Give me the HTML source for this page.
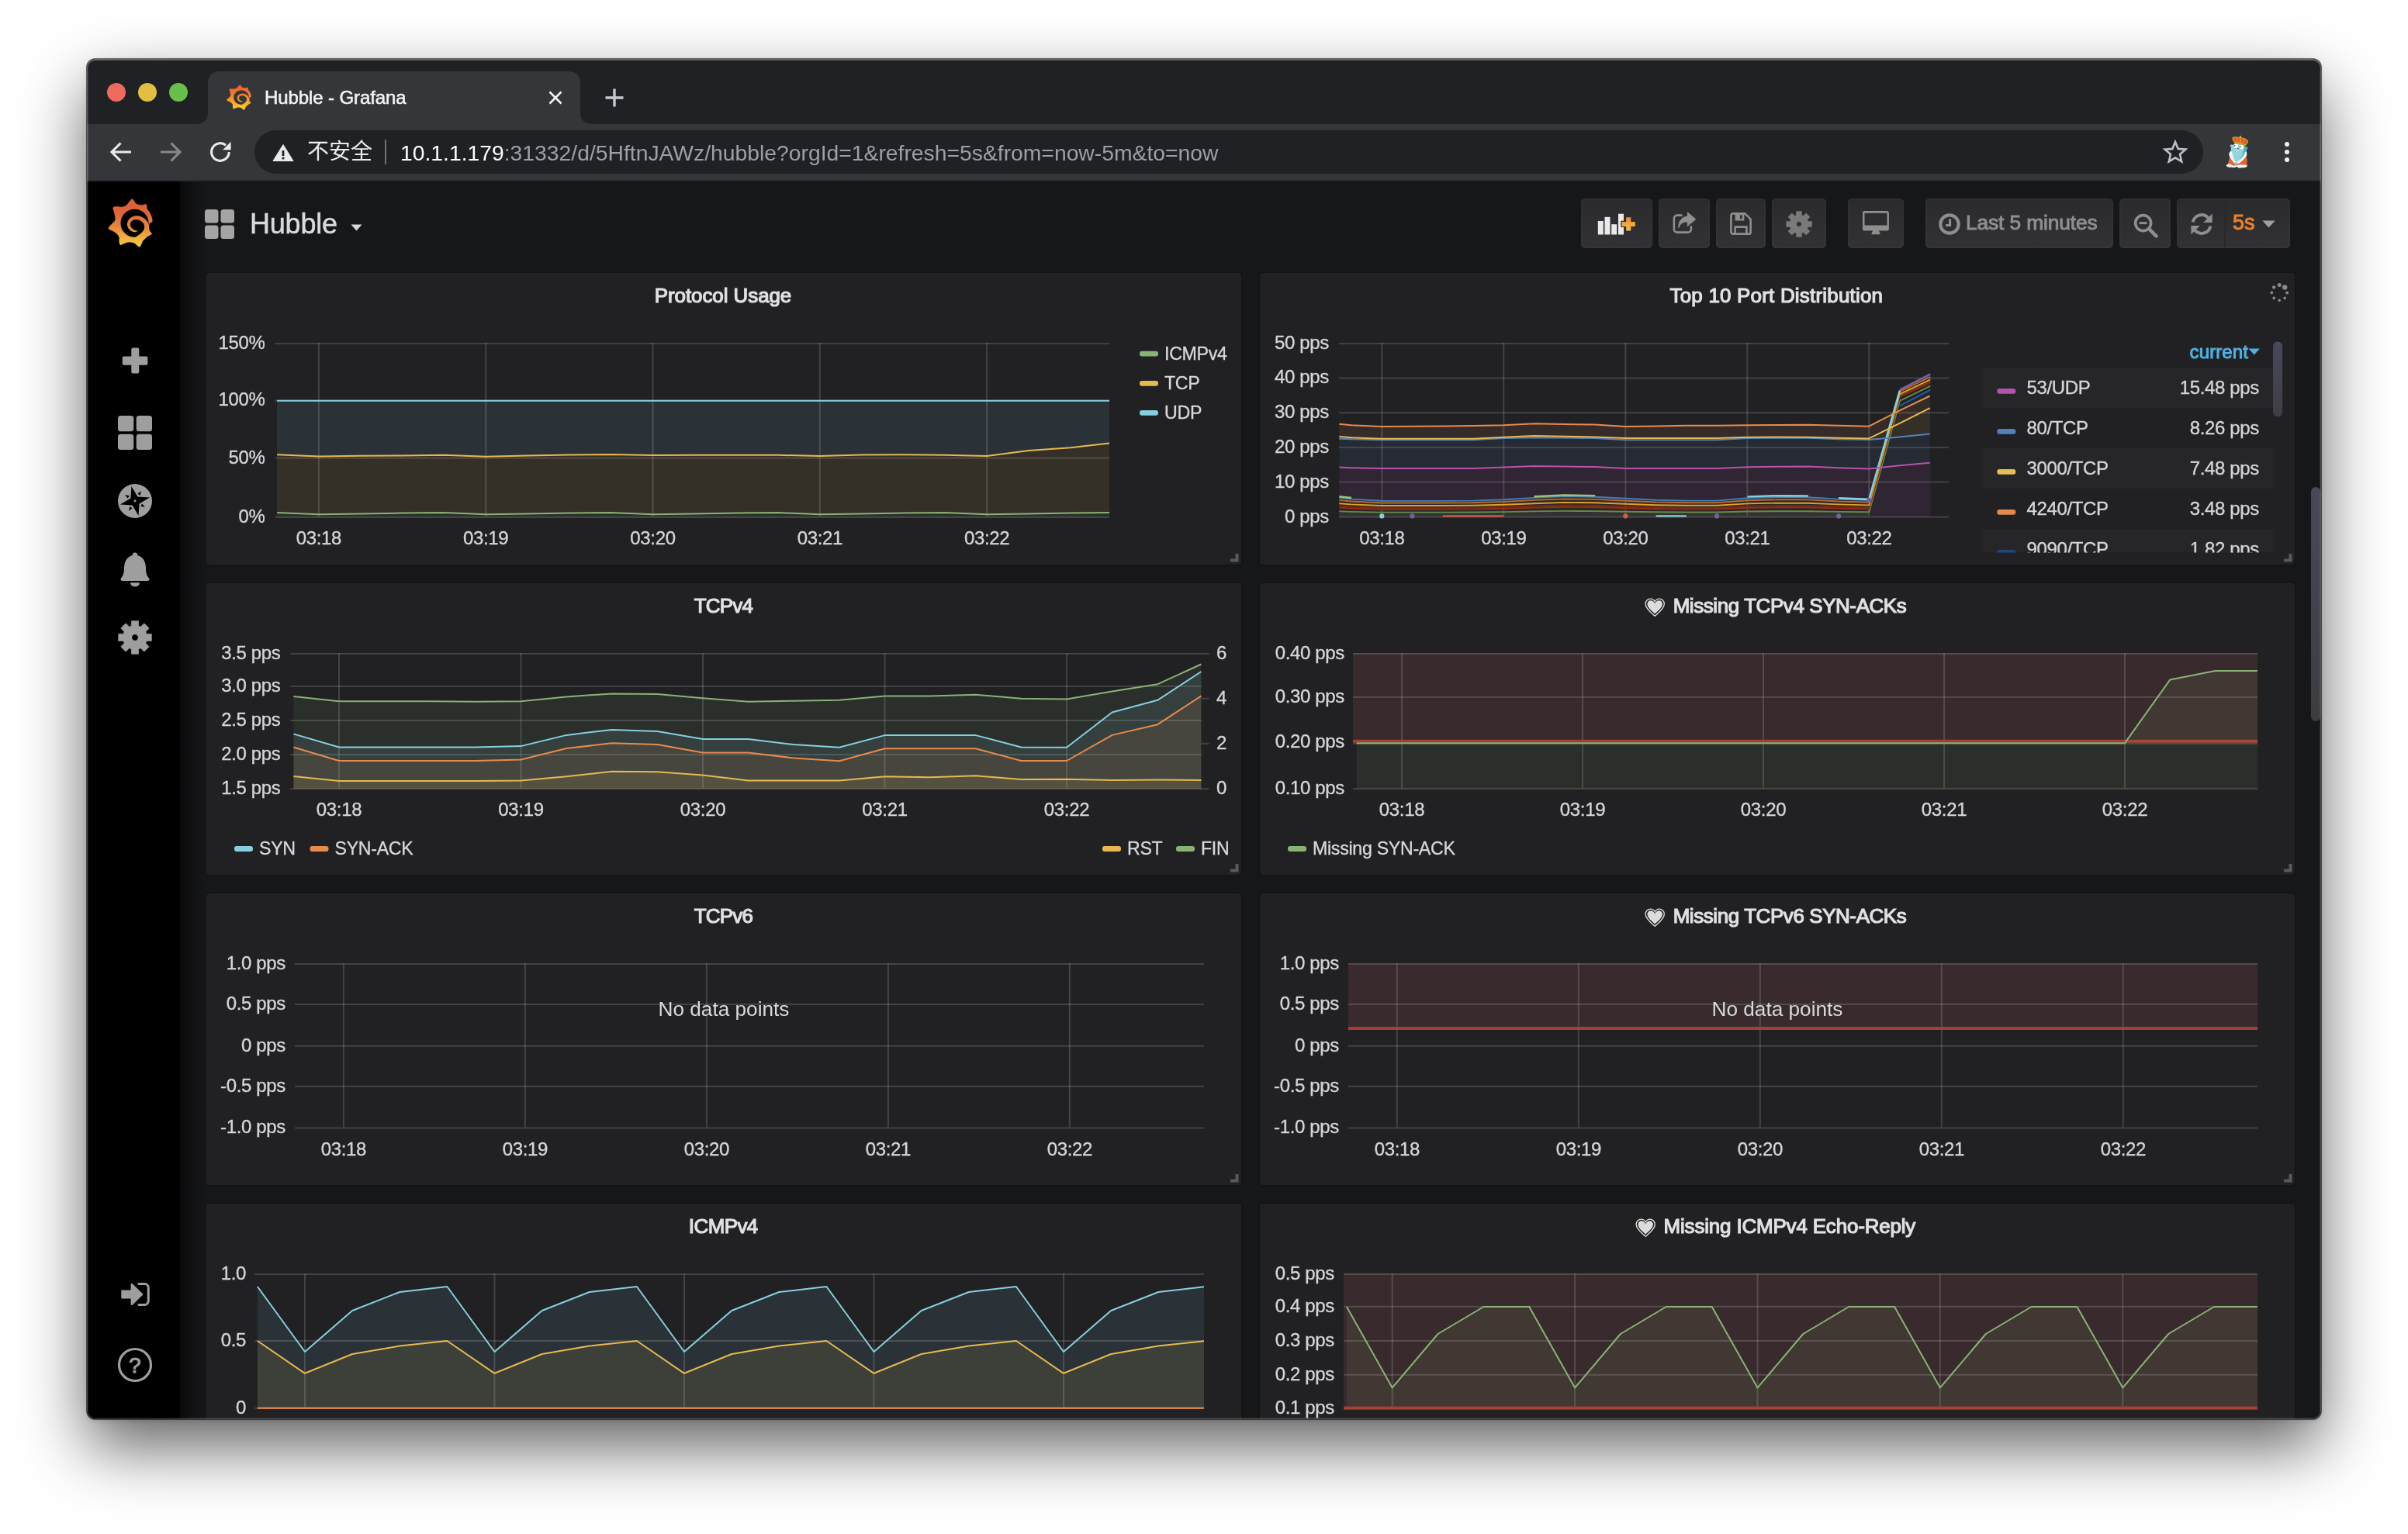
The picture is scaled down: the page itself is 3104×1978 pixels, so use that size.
<!DOCTYPE html>
<html lang="zh"><head><meta charset="utf-8"><title>Hubble - Grafana</title>
<style>
html,body{margin:0;padding:0;background:#fff;overflow:hidden;}
body{width:3104px;height:1978px;position:relative;overflow:hidden;font-family:'Liberation Sans', sans-serif;}
#win{position:absolute;left:112px;top:76px;width:2880px;height:1754px;border-radius:11px;overflow:hidden;background:#161719;
 box-shadow:0 36px 84px rgba(0,0,0,0.62),0 0 0 1px rgba(0,0,0,0.55),0 2px 6px rgba(0,0,0,0.12);}
#abs{position:absolute;left:-112px;top:-76px;width:3104px;height:1978px;will-change:transform;}
#abs div,#abs span,#abs svg{position:absolute;}
.t{white-space:pre;line-height:1;}
.med{-webkit-text-stroke:1.2px currentColor;}
.med2{-webkit-text-stroke:0.95px currentColor;}
.panel{background:#212124;border:2px solid #141414;border-radius:6px;box-sizing:border-box;overflow:hidden;}
.ptitle{left:0;right:0;top:11.5px;height:36px;display:flex;justify-content:center;align-items:center;padding-right:2px;box-sizing:border-box;font-size:25.9px;color:#dfe0e2;}
.ptitle span{position:static !important;}
.nbtn{top:256px;height:64px;border-radius:5px;background:linear-gradient(#2a2a2d,#323235);box-shadow:inset 0 0 0 2px rgba(255,255,255,0.022);}
svg text{font-family:'Liberation Sans', sans-serif;}
.ax{font-size:24px;letter-spacing:-0.35px;fill:#d4d5d6;stroke:#d4d5d6;stroke-width:0.35px;}
</style></head><body>
<div id="win"><div id="abs">
<div id="tabstrip" style="left:112px;top:76px;width:2880px;height:84px;background:#202124;"></div><div id="toolbar" style="left:112px;top:160px;width:2880px;height:72px;background:#35363a;"></div><div style="left:112px;top:232px;width:2880px;height:2px;background:#28292c;"></div><svg id="tab" style="left:0;top:0" width="3104" height="240"><path d="M252,160 Q268,160 268,144 L268,108 Q268,92 284,92 L732,92 Q748,92 748,108 L748,144 Q748,160 764,160 Z" fill="#35363a"/></svg><div style="left:138px;top:107px;width:24px;height:24px;border-radius:50%;background:#ed6a5e;"></div><div style="left:178px;top:107px;width:24px;height:24px;border-radius:50%;background:#e2bf41;"></div><div style="left:218px;top:107px;width:24px;height:24px;border-radius:50%;background:#68c04b;"></div><div style="left:292px;top:109px;width:32px;height:33px;"><svg width="32" height="33" viewBox="170 140 1120 1215" preserveAspectRatio="none"><defs><linearGradient id="gfav" gradientUnits="userSpaceOnUse" x1="0" y1="150" x2="0" y2="1340"><stop offset="0" stop-color="#ef5b2a"/><stop offset="0.35" stop-color="#f27a2a"/><stop offset="0.7" stop-color="#f7a825"/><stop offset="1" stop-color="#fbd32a"/></linearGradient></defs><path d="M775.0,150.0 L790.6,156.1 L805.1,172.6 L818.8,193.3 L832.0,212.0 L842.9,228.6 L852.1,245.8 L863.1,261.9 L880.0,275.0 L906.1,284.7 L938.6,292.1 L971.8,297.1 L1000.0,300.0 L1021.4,299.8 L1039.1,296.9 L1054.7,293.0 L1070.0,290.0 L1085.7,287.0 L1100.9,283.4 L1114.4,281.9 L1125.0,285.0 L1131.7,294.4 L1135.3,308.4 L1137.5,324.5 L1140.0,340.0 L1141.6,353.9 L1141.9,367.8 L1143.8,382.8 L1150.0,400.0 L1162.8,419.9 L1180.2,441.9 L1198.7,465.4 L1215.0,490.0 L1228.8,516.6 L1241.6,545.0 L1252.9,573.4 L1262.0,600.0 L1268.6,625.1 L1273.2,649.6 L1275.9,671.7 L1277.0,690.0 L1276.8,703.4 L1275.1,713.0 L1271.3,720.3 L1265.0,727.0 L1254.5,731.3 L1240.7,733.0 L1226.5,736.2 L1215.0,745.0 L1206.5,761.2 L1199.6,782.4 L1194.6,806.1 L1192.0,830.0 L1192.0,854.9 L1194.4,881.6 L1198.8,907.5 L1205.0,930.0 L1214.2,948.5 L1226.2,964.4 L1238.4,978.0 L1248.0,990.0 L1256.0,999.4 L1263.2,1006.2 L1267.1,1012.5 L1265.0,1020.0 L1254.2,1029.5 L1236.7,1039.9 L1217.1,1050.3 L1200.0,1060.0 L1186.8,1068.0 L1175.0,1074.9 L1163.2,1082.4 L1150.0,1092.0 L1134.3,1105.1 L1117.2,1120.5 L1100.2,1136.2 L1085.0,1150.0 L1071.9,1160.6 L1060.2,1169.2 L1049.6,1178.3 L1040.0,1190.0 L1032.3,1205.2 L1026.3,1222.5 L1020.1,1241.1 L1012.0,1260.0 L1001.8,1282.3 L990.4,1307.5 L977.3,1328.9 L962.0,1340.0 L943.0,1336.5 L921.0,1322.8 L899.0,1305.2 L880.0,1290.0 L866.2,1277.8 L855.5,1265.6 L844.6,1254.3 L830.0,1245.0 L810.1,1237.9 L786.9,1232.4 L762.7,1228.5 L740.0,1226.0 L719.8,1224.7 L700.6,1224.6 L681.2,1226.3 L660.0,1230.0 L636.0,1236.8 L610.1,1246.1 L584.2,1256.1 L560.0,1265.0 L536.9,1275.3 L514.4,1287.1 L494.1,1294.5 L478.0,1292.0 L466.9,1275.1 L459.7,1247.7 L455.1,1217.0 L452.0,1190.0 L452.1,1168.7 L455.3,1149.2 L457.6,1130.2 L455.0,1110.0 L446.4,1087.7 L433.9,1064.4 L418.3,1041.3 L400.0,1020.0 L378.5,1001.0 L353.8,983.4 L327.1,966.7 L300.0,950.0 L267.8,934.3 L231.4,919.7 L200.6,903.9 L185.0,885.0 L190.6,861.2 L211.1,834.1 L237.8,806.1 L262.0,780.0 L284.1,756.4 L307.9,734.1 L329.5,712.1 L345.0,690.0 L353.0,668.4 L355.6,647.5 L354.6,625.3 L352.0,600.0 L346.9,569.7 L338.8,535.9 L329.8,501.7 L322.0,470.0 L313.1,440.2 L302.9,411.1 L296.7,385.2 L300.0,365.0 L316.0,351.8 L341.1,344.1 L370.7,340.0 L400.0,338.0 L428.6,340.2 L458.8,346.6 L489.5,352.2 L520.0,352.0 L551.4,344.2 L583.6,331.8 L614.1,316.4 L640.0,300.0 L659.3,282.2 L673.9,262.2 L687.1,241.7 L702.0,222.0 L719.9,200.4 L738.8,177.2 L757.6,158.4Z" fill="url(#gfav)" stroke="url(#gfav)" stroke-width="6" stroke-linejoin="round"/><circle cx="837" cy="752" r="349" fill="#35363a"/><path d="M921.4,934.6 L917.8,935.2 L913.0,936.0 L907.4,937.0 L901.2,938.0 L894.8,938.9 L888.5,939.5 L882.7,939.6 L877.6,939.2 L872.8,938.6 L868.1,937.8 L863.6,936.8 L859.4,935.5 L855.2,934.1 L850.9,932.3 L846.2,930.3 L840.9,927.8 L834.5,924.8 L827.6,921.6 L820.5,918.1 L813.4,914.4 L806.4,910.4 L799.8,906.1 L793.7,901.6 L788.1,896.8 L782.0,891.2 L775.5,884.8 L769.0,877.9 L762.7,870.8 L756.8,863.4 L751.5,856.1 L747.0,849.0 L743.2,842.1 L739.8,834.7 L736.5,827.0 L733.7,819.1 L731.3,811.2 L729.5,803.4 L728.4,795.8 L727.8,788.5 L728.0,781.1 L728.8,773.0 L730.2,764.1 L732.2,755.0 L734.8,745.9 L737.9,737.1 L741.6,729.1 L745.7,721.9 L750.1,715.8 L755.5,710.0 L762.2,703.8 L770.1,697.6 L778.9,691.6 L788.3,686.0 L798.0,680.8 L807.7,676.3 L817.2,672.5 L826.7,669.3 L836.4,666.5 L846.3,664.3 L856.3,662.7 L866.3,661.7 L876.3,661.2 L886.2,661.5 L895.9,662.3 L906.1,663.9 L917.3,666.3 L929.0,669.5 L941.0,673.4 L953.0,677.9 L964.6,682.9 L975.7,688.2 L986.0,693.9 L995.8,699.9 L1005.5,706.5 L1014.9,713.7 L1023.9,721.2 L1032.2,729.0 L1039.9,737.0 L1046.8,745.1 L1052.8,753.3 L1058.4,761.9 L1063.6,771.1 L1068.3,780.7 L1072.4,790.6 L1075.8,800.6 L1078.5,810.5 L1080.4,820.3 L1081.5,829.7 L1081.9,839.3 L1081.5,849.6 L1080.5,860.5 L1078.8,871.8 L1076.3,883.3 L1073.3,894.7 L1069.6,905.8 L1065.4,916.0 L1060.8,925.5 L1055.4,934.7 L1049.3,943.9 L1042.5,953.2 L1035.1,962.4 L1027.2,971.5 L1018.9,980.7 L1010.2,989.7 L1001.2,998.4 L991.7,1006.8 L981.8,1014.8 L971.7,1022.5 L961.7,1029.7 L952.0,1036.4 L942.8,1042.8 L934.5,1048.5 L926.5,1054.3 L917.6,1060.6 L907.9,1067.4 L897.6,1074.3 L887.0,1081.1 L876.5,1087.5 L866.3,1093.5 L857.9,1098.3 L851.5,1102.0 L844.8,1105.4 L837.0,1108.7 L828.4,1111.6 L819.7,1114.2 L811.0,1116.4 L802.2,1118.4 L795.0,1120.2 L805.0,1239.8 L809.8,1240.6 L816.6,1241.8 L826.4,1243.3 L838.4,1244.7 L852.4,1245.6 L867.9,1245.7 L885.0,1244.4 L902.1,1241.7 L917.8,1238.3 L933.4,1234.7 L949.8,1230.4 L966.8,1225.1 L984.1,1218.8 L1001.6,1211.2 L1018.9,1202.1 L1035.5,1191.5 L1050.8,1179.5 L1064.7,1166.7 L1077.6,1153.0 L1089.6,1138.8 L1100.7,1124.2 L1111.0,1109.5 L1120.6,1094.8 L1129.8,1080.3 L1138.4,1065.9 L1146.5,1051.2 L1154.3,1036.0 L1161.6,1020.3 L1168.4,1004.3 L1174.5,987.8 L1180.0,971.0 L1184.6,954.0 L1188.3,937.1 L1191.3,920.0 L1193.7,902.7 L1195.4,885.2 L1196.2,867.5 L1196.1,849.7 L1194.9,831.9 L1192.5,814.3 L1188.8,797.1 L1184.1,780.4 L1178.4,764.1 L1171.8,748.3 L1164.3,733.0 L1156.0,718.3 L1147.0,704.2 L1137.2,690.7 L1126.4,677.7 L1114.8,665.3 L1102.5,653.7 L1089.6,642.7 L1076.3,632.5 L1062.5,622.9 L1048.4,614.2 L1034.0,606.1 L1019.0,598.8 L1003.4,592.0 L987.3,585.9 L970.9,580.5 L954.3,575.9 L937.5,572.1 L920.7,569.3 L904.1,567.7 L887.6,567.2 L871.5,567.9 L855.6,569.7 L840.2,572.4 L825.1,576.1 L810.6,580.5 L796.5,585.6 L782.8,591.5 L769.3,598.2 L756.0,605.8 L742.8,614.3 L730.1,623.5 L717.9,633.5 L706.3,644.2 L695.6,655.7 L685.9,668.2 L677.5,681.5 L670.5,695.4 L664.8,709.5 L660.2,723.6 L656.8,737.8 L654.3,751.7 L652.7,765.4 L652.0,778.9 L652.4,792.6 L653.9,806.1 L656.5,819.3 L659.9,832.0 L664.2,844.2 L669.1,855.9 L674.6,867.1 L680.8,877.9 L688.0,888.7 L696.1,899.0 L704.8,908.7 L713.9,917.7 L723.3,926.1 L732.8,933.8 L742.3,940.8 L751.9,947.2 L762.1,953.0 L772.6,957.9 L783.0,961.9 L793.2,965.1 L803.1,967.7 L812.4,969.7 L821.0,971.1 L829.1,972.2 L837.0,973.0 L844.6,973.2 L851.7,972.8 L858.5,972.0 L864.8,970.6 L870.8,969.0 L876.5,967.0 L882.4,964.8 L888.6,961.9 L894.9,958.3 L900.9,954.3 L906.4,950.2 L911.5,946.2 L916.0,942.6 L919.7,939.6 L922.6,937.4Z" fill="url(#gfav)"/></svg></div><div class="t" style="left:341px;top:114px;font-size:24px;letter-spacing:-0.1px;-webkit-text-stroke:0.55px #f1f3f4;color:#f1f3f4;">Hubble - Grafana</div><svg style="left:707px;top:117px" width="18" height="18" viewBox="0 0 18 18"><path d="M1.5,1.5 L16.5,16.5 M16.5,1.5 L1.5,16.5" stroke="#f1f3f4" stroke-width="2.6" fill="none"/></svg><svg style="left:780px;top:114px" width="24" height="24" viewBox="0 0 24 24"><path d="M12,0.5 V23.5 M0.5,12 H23.5" stroke="#c6c9ce" stroke-width="3.4" fill="none"/></svg><svg style="left:141px;top:181px" width="30" height="30" viewBox="0 0 30 30"><path d="M28,15 H4 M14.5,3.5 L3,15 L14.5,26.5" stroke="#e8eaed" stroke-width="3.1" fill="none" stroke-linejoin="miter"/></svg><svg style="left:205px;top:181px" width="30" height="30" viewBox="0 0 30 30"><path d="M2,15 H26 M15.5,3.5 L27,15 L15.5,26.5" stroke="#86888c" stroke-width="3.1" fill="none" stroke-linejoin="miter"/></svg><svg style="left:269px;top:181px" width="32" height="30" viewBox="0 0 32 30"><path d="M26.2,15 A11.3,11.3 0 1,1 22.0,6.2" stroke="#e8eaed" stroke-width="3.1" fill="none"/><path d="M28.6,1.8 V12.2 H18.2 Z" fill="#e8eaed"/></svg><div id="omnibox" style="left:328px;top:168px;width:2512px;height:56px;border-radius:28px;background:#202124;"></div><svg style="left:351px;top:185px" width="28" height="24" viewBox="0 0 28 24"><path d="M14,1.5 L27,22.5 H1 Z" fill="#e8eaed" stroke="#e8eaed" stroke-width="1" stroke-linejoin="round"/><rect x="12.6" y="9" width="2.8" height="7" fill="#202124"/><rect x="12.6" y="17.6" width="2.8" height="2.8" fill="#202124"/></svg><div class="t" style="left:396px;top:178px;font-size:28px;color:#e8eaed;font-family:'Liberation Sans', 'Noto Sans CJK SC', sans-serif;line-height:36px;">不安全</div><div style="left:496px;top:180px;width:2px;height:32px;background:#6e7074;"></div><div class="t" id="url" style="left:516px;top:181px;font-size:28.3px;color:#9aa0a6;line-height:32px;"><span style="position:static;color:#fff">10.1.1.179</span>:31332/d/5HftnJAWz/hubble?orgId=1&amp;refresh=5s&amp;from=now-5m&amp;to=now</div><svg style="left:2787px;top:179px" width="34" height="34" viewBox="0 0 34 34"><path d="M17.00,4.00 L20.70,12.90 L30.31,13.67 L22.99,19.95 L25.23,29.33 L17.00,24.30 L8.77,29.33 L11.01,19.95 L3.69,13.67 L13.30,12.90Z" fill="none" stroke="#bdc1c6" stroke-width="2.6" stroke-linejoin="miter"/></svg><svg style="left:2868.2px;top:173.7px" width="31.9" height="44.7" viewBox="40 30 70 98"><path d="M52,98 L58,84 L98,84 L103,100 L102,119 L47,119 Z" fill="#e8642c"/><path d="M43,116 Q48,110 56,113 Q62,116 66,118 Q70,113 76,116 Q84,112 92,115 Q100,112 104,118 Q98,125 88,122 Q80,126 74,120 Q66,124 58,121 Q48,124 43,116Z" fill="#f7f7f7"/><circle cx="59" cy="61" r="4.2" fill="#7fcad6"/><circle cx="100.5" cy="67" r="4" fill="#4bb6c6"/><path d="M60,60 Q70,52 84,56 Q100,60 101,76 Q100,96 72,110 Q58,96 57,78 Q56,66 60,60Z" fill="#93d4dd"/><path d="M90,58 Q100,62 101,76 Q100,92 80,104 Q96,84 90,58Z" fill="#4fb8c8"/><path d="M54,77 Q58,74 61,80 Q62,96 72,108 L70,113 Q56,100 52,88 Q51,80 54,77Z" fill="#f7f7f7"/><path d="M101,78 Q104,82 101,90 Q92,104 75,113 L72,108 Q92,96 97,80 Q99,76 101,78Z" fill="#f7f7f7"/><circle cx="71.5" cy="112.5" r="3.6" fill="#f2f2f2" stroke="#2a9db0" stroke-width="2.2"/><circle cx="66.5" cy="110.5" r="1.6" fill="#e9b932"/><circle cx="71" cy="61" r="6.3" fill="#fff"/><circle cx="87.5" cy="64.5" r="6.3" fill="#fff"/><circle cx="67.6" cy="60.2" r="1.9" fill="#2b3f5a"/><circle cx="83.6" cy="63.4" r="1.9" fill="#2b3f5a"/><ellipse cx="77.2" cy="69" rx="2.6" ry="1.7" fill="#2b6f86"/><rect x="74.6" y="71.6" width="4.4" height="4.6" rx="1.2" fill="#f3e3e3"/><path d="M62.5,43 Q60,36.5 66,36.8 Q73,35 78,38.5 L83.6,33.6 L86.5,38.5 Q95,38.5 102.5,44.5 Q106.5,49 103,53 L97,60.5 Q82,52.5 68.5,54 Z" fill="#e9572b" stroke="#c9a428" stroke-width="2.6" stroke-linejoin="round"/><path d="M84.8,32 L84,50" stroke="#d8b52e" stroke-width="2.4"/><path d="M73,38 L74,50 M95,41 L91,52" stroke="#c9a428" stroke-width="1.8" fill="none"/><path d="M67.5,52 Q82,50 97.5,58.5" stroke="#c9a428" stroke-width="3.4" fill="none"/></svg><div style="left:2945px;top:183px;width:6px;height:6px;border-radius:50%;background:#eceef0;"></div><div style="left:2945px;top:193px;width:6px;height:6px;border-radius:50%;background:#eceef0;"></div><div style="left:2945px;top:203px;width:6px;height:6px;border-radius:50%;background:#eceef0;"></div><div id="page" style="left:112px;top:234px;width:2880px;height:1600px;background:#161719;"></div><div style="left:232px;top:234px;width:36px;height:1600px;background:linear-gradient(to right,rgba(0,0,0,0.55),rgba(0,0,0,0.25) 45%,rgba(0,0,0,0));"></div><div id="sidemenu" style="left:112px;top:234px;width:120px;height:1600px;background:#000;"></div><div style="left:139px;top:256px;width:58px;height:63px;"><svg width="58" height="63" viewBox="170 140 1120 1215" preserveAspectRatio="none"><defs><linearGradient id="glogo" gradientUnits="userSpaceOnUse" x1="0" y1="150" x2="0" y2="1340"><stop offset="0" stop-color="#dd5f36"/><stop offset="0.3" stop-color="#de6439"/><stop offset="0.6" stop-color="#e78b3d"/><stop offset="1" stop-color="#f5cf45"/></linearGradient></defs><path d="M775.0,150.0 L790.6,156.1 L805.1,172.6 L818.8,193.3 L832.0,212.0 L842.9,228.6 L852.1,245.8 L863.1,261.9 L880.0,275.0 L906.1,284.7 L938.6,292.1 L971.8,297.1 L1000.0,300.0 L1021.4,299.8 L1039.1,296.9 L1054.7,293.0 L1070.0,290.0 L1085.7,287.0 L1100.9,283.4 L1114.4,281.9 L1125.0,285.0 L1131.7,294.4 L1135.3,308.4 L1137.5,324.5 L1140.0,340.0 L1141.6,353.9 L1141.9,367.8 L1143.8,382.8 L1150.0,400.0 L1162.8,419.9 L1180.2,441.9 L1198.7,465.4 L1215.0,490.0 L1228.8,516.6 L1241.6,545.0 L1252.9,573.4 L1262.0,600.0 L1268.6,625.1 L1273.2,649.6 L1275.9,671.7 L1277.0,690.0 L1276.8,703.4 L1275.1,713.0 L1271.3,720.3 L1265.0,727.0 L1254.5,731.3 L1240.7,733.0 L1226.5,736.2 L1215.0,745.0 L1206.5,761.2 L1199.6,782.4 L1194.6,806.1 L1192.0,830.0 L1192.0,854.9 L1194.4,881.6 L1198.8,907.5 L1205.0,930.0 L1214.2,948.5 L1226.2,964.4 L1238.4,978.0 L1248.0,990.0 L1256.0,999.4 L1263.2,1006.2 L1267.1,1012.5 L1265.0,1020.0 L1254.2,1029.5 L1236.7,1039.9 L1217.1,1050.3 L1200.0,1060.0 L1186.8,1068.0 L1175.0,1074.9 L1163.2,1082.4 L1150.0,1092.0 L1134.3,1105.1 L1117.2,1120.5 L1100.2,1136.2 L1085.0,1150.0 L1071.9,1160.6 L1060.2,1169.2 L1049.6,1178.3 L1040.0,1190.0 L1032.3,1205.2 L1026.3,1222.5 L1020.1,1241.1 L1012.0,1260.0 L1001.8,1282.3 L990.4,1307.5 L977.3,1328.9 L962.0,1340.0 L943.0,1336.5 L921.0,1322.8 L899.0,1305.2 L880.0,1290.0 L866.2,1277.8 L855.5,1265.6 L844.6,1254.3 L830.0,1245.0 L810.1,1237.9 L786.9,1232.4 L762.7,1228.5 L740.0,1226.0 L719.8,1224.7 L700.6,1224.6 L681.2,1226.3 L660.0,1230.0 L636.0,1236.8 L610.1,1246.1 L584.2,1256.1 L560.0,1265.0 L536.9,1275.3 L514.4,1287.1 L494.1,1294.5 L478.0,1292.0 L466.9,1275.1 L459.7,1247.7 L455.1,1217.0 L452.0,1190.0 L452.1,1168.7 L455.3,1149.2 L457.6,1130.2 L455.0,1110.0 L446.4,1087.7 L433.9,1064.4 L418.3,1041.3 L400.0,1020.0 L378.5,1001.0 L353.8,983.4 L327.1,966.7 L300.0,950.0 L267.8,934.3 L231.4,919.7 L200.6,903.9 L185.0,885.0 L190.6,861.2 L211.1,834.1 L237.8,806.1 L262.0,780.0 L284.1,756.4 L307.9,734.1 L329.5,712.1 L345.0,690.0 L353.0,668.4 L355.6,647.5 L354.6,625.3 L352.0,600.0 L346.9,569.7 L338.8,535.9 L329.8,501.7 L322.0,470.0 L313.1,440.2 L302.9,411.1 L296.7,385.2 L300.0,365.0 L316.0,351.8 L341.1,344.1 L370.7,340.0 L400.0,338.0 L428.6,340.2 L458.8,346.6 L489.5,352.2 L520.0,352.0 L551.4,344.2 L583.6,331.8 L614.1,316.4 L640.0,300.0 L659.3,282.2 L673.9,262.2 L687.1,241.7 L702.0,222.0 L719.9,200.4 L738.8,177.2 L757.6,158.4Z" fill="url(#glogo)" stroke="url(#glogo)" stroke-width="6" stroke-linejoin="round"/><circle cx="837" cy="752" r="349" fill="#000"/><path d="M921.4,934.6 L917.8,935.2 L913.0,936.0 L907.4,937.0 L901.2,938.0 L894.8,938.9 L888.5,939.5 L882.7,939.6 L877.6,939.2 L872.8,938.6 L868.1,937.8 L863.6,936.8 L859.4,935.5 L855.2,934.1 L850.9,932.3 L846.2,930.3 L840.9,927.8 L834.5,924.8 L827.6,921.6 L820.5,918.1 L813.4,914.4 L806.4,910.4 L799.8,906.1 L793.7,901.6 L788.1,896.8 L782.0,891.2 L775.5,884.8 L769.0,877.9 L762.7,870.8 L756.8,863.4 L751.5,856.1 L747.0,849.0 L743.2,842.1 L739.8,834.7 L736.5,827.0 L733.7,819.1 L731.3,811.2 L729.5,803.4 L728.4,795.8 L727.8,788.5 L728.0,781.1 L728.8,773.0 L730.2,764.1 L732.2,755.0 L734.8,745.9 L737.9,737.1 L741.6,729.1 L745.7,721.9 L750.1,715.8 L755.5,710.0 L762.2,703.8 L770.1,697.6 L778.9,691.6 L788.3,686.0 L798.0,680.8 L807.7,676.3 L817.2,672.5 L826.7,669.3 L836.4,666.5 L846.3,664.3 L856.3,662.7 L866.3,661.7 L876.3,661.2 L886.2,661.5 L895.9,662.3 L906.1,663.9 L917.3,666.3 L929.0,669.5 L941.0,673.4 L953.0,677.9 L964.6,682.9 L975.7,688.2 L986.0,693.9 L995.8,699.9 L1005.5,706.5 L1014.9,713.7 L1023.9,721.2 L1032.2,729.0 L1039.9,737.0 L1046.8,745.1 L1052.8,753.3 L1058.4,761.9 L1063.6,771.1 L1068.3,780.7 L1072.4,790.6 L1075.8,800.6 L1078.5,810.5 L1080.4,820.3 L1081.5,829.7 L1081.9,839.3 L1081.5,849.6 L1080.5,860.5 L1078.8,871.8 L1076.3,883.3 L1073.3,894.7 L1069.6,905.8 L1065.4,916.0 L1060.8,925.5 L1055.4,934.7 L1049.3,943.9 L1042.5,953.2 L1035.1,962.4 L1027.2,971.5 L1018.9,980.7 L1010.2,989.7 L1001.2,998.4 L991.7,1006.8 L981.8,1014.8 L971.7,1022.5 L961.7,1029.7 L952.0,1036.4 L942.8,1042.8 L934.5,1048.5 L926.5,1054.3 L917.6,1060.6 L907.9,1067.4 L897.6,1074.3 L887.0,1081.1 L876.5,1087.5 L866.3,1093.5 L857.9,1098.3 L851.5,1102.0 L844.8,1105.4 L837.0,1108.7 L828.4,1111.6 L819.7,1114.2 L811.0,1116.4 L802.2,1118.4 L795.0,1120.2 L805.0,1239.8 L809.8,1240.6 L816.6,1241.8 L826.4,1243.3 L838.4,1244.7 L852.4,1245.6 L867.9,1245.7 L885.0,1244.4 L902.1,1241.7 L917.8,1238.3 L933.4,1234.7 L949.8,1230.4 L966.8,1225.1 L984.1,1218.8 L1001.6,1211.2 L1018.9,1202.1 L1035.5,1191.5 L1050.8,1179.5 L1064.7,1166.7 L1077.6,1153.0 L1089.6,1138.8 L1100.7,1124.2 L1111.0,1109.5 L1120.6,1094.8 L1129.8,1080.3 L1138.4,1065.9 L1146.5,1051.2 L1154.3,1036.0 L1161.6,1020.3 L1168.4,1004.3 L1174.5,987.8 L1180.0,971.0 L1184.6,954.0 L1188.3,937.1 L1191.3,920.0 L1193.7,902.7 L1195.4,885.2 L1196.2,867.5 L1196.1,849.7 L1194.9,831.9 L1192.5,814.3 L1188.8,797.1 L1184.1,780.4 L1178.4,764.1 L1171.8,748.3 L1164.3,733.0 L1156.0,718.3 L1147.0,704.2 L1137.2,690.7 L1126.4,677.7 L1114.8,665.3 L1102.5,653.7 L1089.6,642.7 L1076.3,632.5 L1062.5,622.9 L1048.4,614.2 L1034.0,606.1 L1019.0,598.8 L1003.4,592.0 L987.3,585.9 L970.9,580.5 L954.3,575.9 L937.5,572.1 L920.7,569.3 L904.1,567.7 L887.6,567.2 L871.5,567.9 L855.6,569.7 L840.2,572.4 L825.1,576.1 L810.6,580.5 L796.5,585.6 L782.8,591.5 L769.3,598.2 L756.0,605.8 L742.8,614.3 L730.1,623.5 L717.9,633.5 L706.3,644.2 L695.6,655.7 L685.9,668.2 L677.5,681.5 L670.5,695.4 L664.8,709.5 L660.2,723.6 L656.8,737.8 L654.3,751.7 L652.7,765.4 L652.0,778.9 L652.4,792.6 L653.9,806.1 L656.5,819.3 L659.9,832.0 L664.2,844.2 L669.1,855.9 L674.6,867.1 L680.8,877.9 L688.0,888.7 L696.1,899.0 L704.8,908.7 L713.9,917.7 L723.3,926.1 L732.8,933.8 L742.3,940.8 L751.9,947.2 L762.1,953.0 L772.6,957.9 L783.0,961.9 L793.2,965.1 L803.1,967.7 L812.4,969.7 L821.0,971.1 L829.1,972.2 L837.0,973.0 L844.6,973.2 L851.7,972.8 L858.5,972.0 L864.8,970.6 L870.8,969.0 L876.5,967.0 L882.4,964.8 L888.6,961.9 L894.9,958.3 L900.9,954.3 L906.4,950.2 L911.5,946.2 L916.0,942.6 L919.7,939.6 L922.6,937.4Z" fill="url(#glogo)"/></svg></div><svg style="left:157px;top:448px" width="34" height="34" viewBox="0 0 34 34"><rect x="0.8" y="11.6" width="32.6" height="11.2" rx="2" fill="#9e9e9e"/><rect x="12.3" y="0.6" width="10" height="33" rx="2" fill="#9e9e9e"/></svg><svg style="left:152px;top:536px" width="44" height="44" viewBox="0 0 44 44"><rect x="0.00" y="0.00" width="20.30" height="20.30" rx="3.5" fill="#9e9e9e"/><rect x="0.00" y="23.70" width="20.30" height="20.30" rx="3.5" fill="#9e9e9e"/><rect x="23.70" y="0.00" width="20.30" height="20.30" rx="3.5" fill="#9e9e9e"/><rect x="23.70" y="23.70" width="20.30" height="20.30" rx="3.5" fill="#9e9e9e"/></svg><svg style="left:152px;top:624px" width="44" height="44" viewBox="152 624 44 44"><circle cx="174" cy="646" r="22" fill="#9e9e9e"/><path d="M169.43,626.96 L177.39,640.47 L193.04,641.43 L179.53,649.39 L178.57,665.04 L170.61,651.53 L154.96,650.57 L168.47,642.61Z" fill="#000"/><path d="M181.93,633.06 L180.65,638.72 L177.46,636.77Z M186.94,653.93 L181.28,652.65 L183.23,649.46Z M166.07,658.94 L167.35,653.28 L170.54,655.23Z M161.06,638.07 L166.72,639.35 L164.77,642.54Z " fill="#000"/><circle cx="174" cy="646" r="1.4" fill="#9e9e9e"/></svg><svg style="left:155px;top:712px" width="38" height="45" viewBox="0 0 38 45"><path d="M19,0.5 a3.2,3.2 0 0 1 3.2,3.4 C30,6.2 33,13 33,20.5 C33,27 34.5,31 37,33.6 C38,34.8 37.4,37 35.6,37 H2.4 C0.6,37 0,34.8 1,33.6 C3.5,31 5,27 5,20.5 C5,13 8,6.2 15.8,3.9 A3.2,3.2 0 0 1 19,0.5Z" fill="#9e9e9e"/><path d="M12.8,39.3 H25.2 A6.3,6.3 0 0 1 12.8,39.3Z" fill="#9e9e9e"/></svg><svg style="left:152px;top:800px" width="44" height="44" viewBox="0 0 100 100"><path d="M39.51,16.09 L39.92,1.54 L60.08,1.54 L60.49,16.09 L66.56,18.60 L77.14,8.61 L91.39,22.86 L81.40,33.44 L83.91,39.51 L98.46,39.92 L98.46,60.08 L83.91,60.49 L81.40,66.56 L91.39,77.14 L77.14,91.39 L66.56,81.40 L60.49,83.91 L60.08,98.46 L39.92,98.46 L39.51,83.91 L33.44,81.40 L22.86,91.39 L8.61,77.14 L18.60,66.56 L16.09,60.49 L1.54,60.08 L1.54,39.92 L16.09,39.51 L18.60,33.44 L8.61,22.86 L22.86,8.61 L33.44,18.60Z M40.40,50.00 a9.6,9.6 0 1,0 19.2,0 a9.6,9.6 0 1,0 -19.2,0Z" fill="#9e9e9e" fill-rule="evenodd" stroke="#9e9e9e" stroke-width="1.6" stroke-linejoin="round"/></svg><svg style="left:156px;top:1654px" width="37" height="30" viewBox="0 0 37 30"><path d="M0.5,9.6 H12 V2.2 a1.2,1.2 0 0 1 2,-0.9 L27.2,14.1 a1.2,1.2 0 0 1 0,1.8 L14,28.7 a1.2,1.2 0 0 1 -2,-0.9 V20.4 H0.5 a0.8,0.8 0 0 1 -0.8,-0.8 V10.4 a0.8,0.8 0 0 1 0.8,-0.8Z" transform="translate(0.6,0)" fill="#9e9e9e"/><path d="M23,1.6 H30.5 a4.8,4.8 0 0 1 4.8,4.8 V23.6 a4.8,4.8 0 0 1 -4.8,4.8 H23" fill="none" stroke="#9e9e9e" stroke-width="3" stroke-linecap="round"/></svg><svg style="left:151px;top:1737px" width="46" height="46" viewBox="0 0 46 46"><circle cx="23" cy="23" r="20.5" fill="none" stroke="#9e9e9e" stroke-width="3.2"/><text x="23" y="33.2" text-anchor="middle" font-size="28.5" fill="#9e9e9e" stroke="#9e9e9e" stroke-width="1.1">?</text></svg><svg style="left:264px;top:270px" width="38" height="38" viewBox="0 0 38 38"><rect x="0.00" y="0.00" width="17.50" height="17.50" rx="3.5" fill="#a4a4a4"/><rect x="0.00" y="20.50" width="17.50" height="17.50" rx="3.5" fill="#a4a4a4"/><rect x="20.50" y="0.00" width="17.50" height="17.50" rx="3.5" fill="#a4a4a4"/><rect x="20.50" y="20.50" width="17.50" height="17.50" rx="3.5" fill="#a4a4a4"/></svg><div class="t" style="left:322px;top:269px;font-size:36px;color:#d8d9da;line-height:40px;-webkit-text-stroke:0.5px #d8d9da;letter-spacing:-0.2px;">Hubble</div><svg style="left:452px;top:289px" width="15" height="9" viewBox="0 0 15 9"><path d="M0.5,0.5 H14.5 L7.5,8.5Z" fill="#d8d9da"/></svg><div class="nbtn" style="left:2038px;width:92px;"></div><svg style="left:2038px;top:256px" width="92" height="64" viewBox="2038 256 92 64"><defs><linearGradient id="gplus" x1="0" y1="0" x2="0" y2="1"><stop offset="0" stop-color="#ee8a38"/><stop offset="1" stop-color="#f2c144"/></linearGradient></defs><rect x="2059.8" y="285" width="7" height="17.5" fill="#e9e9e9"/><rect x="2068.5" y="279.8" width="7" height="22.69999999999999" fill="#e9e9e9"/><rect x="2077.2" y="289.2" width="7" height="13.300000000000011" fill="#e9e9e9"/><rect x="2086" y="275.7" width="7" height="26.80000000000001" fill="#e9e9e9"/><path d="M2096.2,280.2 h6 v5.7 h5.7 v6 h-5.7 v5.7 h-6 v-5.7 h-5.7 v-6 h5.7z" fill="url(#gplus)" stroke="#2e2e31" stroke-width="2.4" paint-order="stroke"/></svg><div class="nbtn" style="left:2138px;width:66px;"></div><svg style="left:2156px;top:272.5px" width="31.3" height="29.4" viewBox="0 0 34 32"><path d="M12.5,5 H6.5 A4.5,4.5 0 0 0 2,9.5 V24.5 A4.5,4.5 0 0 0 6.5,29 H21.5 A4.5,4.5 0 0 0 26,24.5 V21" fill="none" stroke="#8e8e8e" stroke-width="2.8" stroke-linecap="round"/><path d="M21,0.8 L32.5,10.5 L21,20.2 V14.2 C14.5,14.2 10.8,16.2 8.6,22.6 C8,13.6 12.6,7 21,6.6Z" fill="#8e8e8e" stroke="#8e8e8e" stroke-width="1" stroke-linejoin="round"/></svg><div class="nbtn" style="left:2212px;width:64px;"></div><svg style="left:2230px;top:274px" width="28" height="29" viewBox="0 0 28 29"><path d="M3.2,1.4 H19.4 L26.6,8.6 V25.4 a2.2,2.2 0 0 1 -2.2,2.2 H3.6 a2.2,2.2 0 0 1 -2.2,-2.2 V3.6 a2.2,2.2 0 0 1 2.2,-2.2Z" fill="none" stroke="#8e8e8e" stroke-width="2.6" stroke-linejoin="round"/><path d="M6.6,27 V18.6 H21.4 V27" fill="none" stroke="#8e8e8e" stroke-width="2.6"/><path d="M7.4,2 V9.6 H17.6 V2" fill="#8e8e8e" stroke="#8e8e8e" stroke-width="1.6"/><rect x="13" y="3.2" width="2.6" height="5" fill="#2e2e31"/></svg><div class="nbtn" style="left:2284px;width:70px;"></div><svg style="left:2302px;top:272px" width="34" height="34" viewBox="0 0 100 100"><path d="M39.51,16.09 L39.92,1.54 L60.08,1.54 L60.49,16.09 L66.56,18.60 L77.14,8.61 L91.39,22.86 L81.40,33.44 L83.91,39.51 L98.46,39.92 L98.46,60.08 L83.91,60.49 L81.40,66.56 L91.39,77.14 L77.14,91.39 L66.56,81.40 L60.49,83.91 L60.08,98.46 L39.92,98.46 L39.51,83.91 L33.44,81.40 L22.86,91.39 L8.61,77.14 L18.60,66.56 L16.09,60.49 L1.54,60.08 L1.54,39.92 L16.09,39.51 L18.60,33.44 L8.61,22.86 L22.86,8.61 L33.44,18.60Z M40.40,50.00 a9.6,9.6 0 1,0 19.2,0 a9.6,9.6 0 1,0 -19.2,0Z" fill="#7a7a7a" fill-rule="evenodd" stroke="#7a7a7a" stroke-width="1.6" stroke-linejoin="round"/></svg><div class="nbtn" style="left:2382px;width:72px;"></div><svg style="left:2401px;top:272.3px" width="36" height="31" viewBox="0 0 36 31"><path d="M2.6,0 H31.3 a2.6,2.6 0 0 1 2.6,2.6 V22.9 a2.6,2.6 0 0 1 -2.6,2.6 H2.6 a2.6,2.6 0 0 1 -2.6,-2.6 V2.6 a2.6,2.6 0 0 1 2.6,-2.6Z M2.5,2.7 V18.6 H31.5 V2.7Z" fill="#8e8e8e" fill-rule="evenodd"/><path d="M13.2,25 H20.8 L22.6,29.4 a0.6,0.6 0 0 1 -0.5,0.8 H11.9 a0.6,0.6 0 0 1 -0.5,-0.8Z" fill="#8e8e8e"/></svg><div class="nbtn" style="left:2482px;width:242px;"></div><svg style="left:2497.5px;top:274px" width="30" height="30" viewBox="0 0 30 30"><circle cx="15" cy="15" r="11.7" fill="none" stroke="#8e8e8e" stroke-width="4.2"/><path d="M15.6,8.6 V16.4 H10.2" fill="none" stroke="#8e8e8e" stroke-width="3"/></svg><div class="t med2" style="left:2534px;top:272px;font-size:26.3px;color:#8e8e8e;line-height:30px;letter-spacing:-0.1px;">Last 5 minutes</div><div class="nbtn" style="left:2732px;width:66px;"></div><svg style="left:2750px;top:275px" width="32" height="32" viewBox="0 0 32 32"><circle cx="12.6" cy="12.6" r="10" fill="none" stroke="#8e8e8e" stroke-width="3.6"/><path d="M20.2,20.2 L29.4,29.4" stroke="#8e8e8e" stroke-width="4.6" stroke-linecap="round"/><path d="M7.6,12.6 H17.6" stroke="#8e8e8e" stroke-width="3"/></svg><div class="nbtn" style="left:2806px;width:146px;"></div><div style="left:2867px;top:257px;width:2px;height:62px;background:#29292c;"></div><svg style="left:2823px;top:274px" width="30" height="30" viewBox="0 0 30 30"><path d="M3.6,12.4 A11.6,11.6 0 0 1 23.4,6.8" fill="none" stroke="#8e8e8e" stroke-width="4"/><path d="M28.6,1.6 V13 H17.2Z" fill="#8e8e8e"/><path d="M26.4,17.6 A11.6,11.6 0 0 1 6.6,23.2" fill="none" stroke="#8e8e8e" stroke-width="4"/><path d="M1.4,28.4 V17 H12.8Z" fill="#8e8e8e"/></svg><div class="t med2" style="left:2878px;top:272px;font-size:27px;color:#e8822e;line-height:30px;">5s</div><svg style="left:2916px;top:284px" width="17" height="10" viewBox="0 0 17 10"><path d="M0.3,0.5 H16.7 L8.5,9.6Z" fill="#a0a0a0"/></svg><div style="left:2979px;top:628px;width:12px;height:302px;border-radius:6px;background:linear-gradient(#47495c,#3c3c40);"></div><div class="panel" style="left:264px;top:350px;width:1338px;height:380px;"><div class="ptitle t med"><span style="letter-spacing:-0.04px;margin-right:-0.04px">Protocol Usage</span></div><svg style="left:-2px;top:-2px" width="1338" height="380" viewBox="264 350 1338 380"><rect x="354.5" y="442.0" width="1075.5" height="2" fill="rgba(200,200,200,0.20)"/><rect x="354.5" y="515.5" width="1075.5" height="2" fill="rgba(200,200,200,0.20)"/><rect x="354.5" y="589.6" width="1075.5" height="2" fill="rgba(200,200,200,0.20)"/><rect x="354.5" y="666.0" width="1075.5" height="2" fill="rgba(200,200,200,0.20)"/><rect x="409.9" y="442.0" width="2" height="224.0" fill="rgba(200,200,200,0.20)"/><rect x="625.2" y="442.0" width="2" height="224.0" fill="rgba(200,200,200,0.20)"/><rect x="840.5" y="442.0" width="2" height="224.0" fill="rgba(200,200,200,0.20)"/><rect x="1055.8" y="442.0" width="2" height="224.0" fill="rgba(200,200,200,0.20)"/><rect x="1271.1" y="442.0" width="2" height="224.0" fill="rgba(200,200,200,0.20)"/><polygon points="357.1,661.0 410.9,663.3 464.7,662.4 518.5,661.5 572.4,661.0 626.2,663.3 680.0,662.4 733.9,661.5 787.7,661.0 841.5,663.3 895.3,662.4 949.1,661.5 1003.0,661.0 1056.8,663.3 1110.6,662.4 1164.5,661.5 1218.3,661.0 1272.1,663.3 1325.9,662.4 1379.8,661.5 1430.0,661.0 1430.0,667.0 357.1,667.0" fill="rgba(137,178,117,0.1)"/><polygon points="357.1,586.2 410.9,588.5 464.7,587.7 518.5,587.4 572.4,586.8 626.2,588.8 680.0,587.4 733.9,586.5 787.7,585.9 841.5,587.1 895.3,586.8 949.1,586.8 1003.0,586.8 1056.8,588.0 1110.6,586.5 1164.5,586.2 1218.3,586.8 1272.1,588.0 1325.9,581.0 1379.8,577.2 1430.0,571.5 1430.0,661.0 1379.8,661.5 1325.9,662.4 1272.1,663.3 1218.3,661.0 1164.5,661.5 1110.6,662.4 1056.8,663.3 1003.0,661.0 949.1,661.5 895.3,662.4 841.5,663.3 787.7,661.0 733.9,661.5 680.0,662.4 626.2,663.3 572.4,661.0 518.5,661.5 464.7,662.4 410.9,663.3 357.1,661.0" fill="rgba(230,185,80,0.1)"/><polygon points="357.1,516.8 410.9,516.8 464.7,516.8 518.5,516.8 572.4,516.8 626.2,516.8 680.0,516.8 733.9,516.8 787.7,516.8 841.5,516.8 895.3,516.8 949.1,516.8 1003.0,516.8 1056.8,516.8 1110.6,516.8 1164.5,516.8 1218.3,516.8 1272.1,516.8 1325.9,516.8 1379.8,516.8 1430.0,516.8 1430.0,571.5 1379.8,577.2 1325.9,581.0 1272.1,588.0 1218.3,586.8 1164.5,586.2 1110.6,586.5 1056.8,588.0 1003.0,586.8 949.1,586.8 895.3,586.8 841.5,587.1 787.7,585.9 733.9,586.5 680.0,587.4 626.2,588.8 572.4,586.8 518.5,587.4 464.7,587.7 410.9,588.5 357.1,586.2" fill="rgba(133,208,222,0.1)"/><polyline points="357.1,661.0 410.9,663.3 464.7,662.4 518.5,661.5 572.4,661.0 626.2,663.3 680.0,662.4 733.9,661.5 787.7,661.0 841.5,663.3 895.3,662.4 949.1,661.5 1003.0,661.0 1056.8,663.3 1110.6,662.4 1164.5,661.5 1218.3,661.0 1272.1,663.3 1325.9,662.4 1379.8,661.5 1430.0,661.0" fill="none" stroke="#89b275" stroke-width="2" stroke-linejoin="round"/><polyline points="357.1,586.2 410.9,588.5 464.7,587.7 518.5,587.4 572.4,586.8 626.2,588.8 680.0,587.4 733.9,586.5 787.7,585.9 841.5,587.1 895.3,586.8 949.1,586.8 1003.0,586.8 1056.8,588.0 1110.6,586.5 1164.5,586.2 1218.3,586.8 1272.1,588.0 1325.9,581.0 1379.8,577.2 1430.0,571.5" fill="none" stroke="#e6b950" stroke-width="2" stroke-linejoin="round"/><polyline points="357.1,516.8 410.9,516.8 464.7,516.8 518.5,516.8 572.4,516.8 626.2,516.8 680.0,516.8 733.9,516.8 787.7,516.8 841.5,516.8 895.3,516.8 949.1,516.8 1003.0,516.8 1056.8,516.8 1110.6,516.8 1164.5,516.8 1218.3,516.8 1272.1,516.8 1325.9,516.8 1379.8,516.8 1430.0,516.8" fill="none" stroke="#85d0de" stroke-width="2" stroke-linejoin="round"/><text class="ax" x="341.5" y="449.9" text-anchor="end">150%</text><text class="ax" x="341.5" y="523.4" text-anchor="end">100%</text><text class="ax" x="341.5" y="597.5" text-anchor="end">50%</text><text class="ax" x="341.5" y="673.9" text-anchor="end">0%</text><text class="ax" x="410.9" y="701.9" text-anchor="middle">03:18</text><text class="ax" x="626.2" y="701.9" text-anchor="middle">03:19</text><text class="ax" x="841.5" y="701.9" text-anchor="middle">03:20</text><text class="ax" x="1056.8" y="701.9" text-anchor="middle">03:21</text><text class="ax" x="1272.1" y="701.9" text-anchor="middle">03:22</text><rect x="1469" y="452.8" width="24" height="6.8" rx="3" fill="#89b275"/><text x="1501" y="463.8" font-size="23.2" letter-spacing="-0.3" fill="#d8d9da" stroke="#d8d9da" stroke-width="0.3">ICMPv4</text><rect x="1469" y="491.0" width="24" height="6.8" rx="3" fill="#e6b950"/><text x="1501" y="502.0" font-size="23.2" letter-spacing="-0.3" fill="#d8d9da" stroke="#d8d9da" stroke-width="0.3">TCP</text><rect x="1469" y="528.9" width="24" height="6.8" rx="3" fill="#85d0de"/><text x="1501" y="539.9" font-size="23.2" letter-spacing="-0.3" fill="#d8d9da" stroke="#d8d9da" stroke-width="0.3">UDP</text></svg><svg style="left:1320px;top:362px" width="12" height="12" viewBox="0 0 12 12"><path d="M6.5,0 H10.5 V10.5 H0 V6.5 H6.5Z" fill="#595959"/></svg></div><div class="panel" style="left:264px;top:750px;width:1338px;height:380px;"><div class="ptitle t med"><span style="letter-spacing:-0.75px;margin-right:-0.75px">TCPv4</span></div><svg style="left:-2px;top:-2px" width="1338" height="380" viewBox="264 750 1338 380"><rect x="374.2" y="842.0" width="1174.2" height="2" fill="rgba(200,200,200,0.20)"/><rect x="374.2" y="883.9" width="1174.2" height="2" fill="rgba(200,200,200,0.20)"/><rect x="374.2" y="928.0" width="1174.2" height="2" fill="rgba(200,200,200,0.20)"/><rect x="374.2" y="972.0" width="1174.2" height="2" fill="rgba(200,200,200,0.20)"/><rect x="374.2" y="1016.1" width="1174.2" height="2" fill="rgba(200,200,200,0.20)"/><rect x="436.0" y="842.0" width="2" height="174.1" fill="rgba(200,200,200,0.20)"/><rect x="670.5" y="842.0" width="2" height="174.1" fill="rgba(200,200,200,0.20)"/><rect x="905.0" y="842.0" width="2" height="174.1" fill="rgba(200,200,200,0.20)"/><rect x="1139.5" y="842.0" width="2" height="174.1" fill="rgba(200,200,200,0.20)"/><rect x="1374.0" y="842.0" width="2" height="174.1" fill="rgba(200,200,200,0.20)"/><rect x="1548.4" y="842.0" width="10" height="2" fill="rgba(200,200,200,0.20)"/><rect x="1548.4" y="899.8" width="10" height="2" fill="rgba(200,200,200,0.20)"/><rect x="1548.4" y="957.9" width="10" height="2" fill="rgba(200,200,200,0.20)"/><rect x="1548.4" y="1016.1" width="10" height="2" fill="rgba(200,200,200,0.20)"/><polygon points="378.4,897.9 437.0,904.2 495.6,904.2 554.2,904.2 612.9,904.8 671.5,904.2 730.1,898.4 788.8,894.4 847.4,894.9 906.0,900.2 964.6,904.8 1023.2,903.7 1081.9,902.8 1140.5,897.6 1199.1,897.6 1257.8,895.8 1316.4,900.8 1375.0,901.6 1433.6,891.5 1492.2,882.2 1548.4,856.5 1548.4,1017.1 378.4,1017.1" fill="rgba(137,178,117,0.1)"/><polygon points="378.4,946.4 437.0,963.5 495.6,963.5 554.2,963.5 612.9,963.5 671.5,962.1 730.1,947.9 788.8,940.9 847.4,942.9 906.0,953.1 964.6,953.1 1023.2,960.1 1081.9,963.8 1140.5,948.1 1199.1,948.1 1257.8,948.1 1316.4,963.5 1375.0,963.8 1433.6,918.5 1492.2,902.8 1548.4,866.0 1548.4,1017.1 378.4,1017.1" fill="rgba(133,208,222,0.1)"/><polygon points="378.4,963.5 437.0,981.0 495.6,981.0 554.2,981.0 612.9,981.0 671.5,979.5 730.1,965.0 788.8,958.3 847.4,960.1 906.0,970.5 964.6,970.5 1023.2,977.5 1081.9,981.3 1140.5,965.3 1199.1,965.3 1257.8,965.3 1316.4,981.0 1375.0,981.0 1433.6,947.9 1492.2,934.2 1548.4,897.4 1548.4,1017.1 378.4,1017.1" fill="rgba(232,138,76,0.1)"/><polygon points="378.4,1001.0 437.0,1006.9 495.6,1006.9 554.2,1006.9 612.9,1006.9 671.5,1006.6 730.1,1001.3 788.8,994.7 847.4,995.2 906.0,999.6 964.6,1006.6 1023.2,1006.6 1081.9,1006.6 1140.5,1001.3 1199.1,1002.2 1257.8,1000.2 1316.4,1005.1 1375.0,1004.8 1433.6,1006.0 1492.2,1005.4 1548.4,1006.0 1548.4,1017.1 378.4,1017.1" fill="rgba(230,185,80,0.1)"/><polyline points="378.4,946.4 437.0,963.5 495.6,963.5 554.2,963.5 612.9,963.5 671.5,962.1 730.1,947.9 788.8,940.9 847.4,942.9 906.0,953.1 964.6,953.1 1023.2,960.1 1081.9,963.8 1140.5,948.1 1199.1,948.1 1257.8,948.1 1316.4,963.5 1375.0,963.8 1433.6,918.5 1492.2,902.8 1548.4,866.0" fill="none" stroke="#85d0de" stroke-width="2" stroke-linejoin="round"/><polyline points="378.4,963.5 437.0,981.0 495.6,981.0 554.2,981.0 612.9,981.0 671.5,979.5 730.1,965.0 788.8,958.3 847.4,960.1 906.0,970.5 964.6,970.5 1023.2,977.5 1081.9,981.3 1140.5,965.3 1199.1,965.3 1257.8,965.3 1316.4,981.0 1375.0,981.0 1433.6,947.9 1492.2,934.2 1548.4,897.4" fill="none" stroke="#e88a4c" stroke-width="2" stroke-linejoin="round"/><polyline points="378.4,1001.0 437.0,1006.9 495.6,1006.9 554.2,1006.9 612.9,1006.9 671.5,1006.6 730.1,1001.3 788.8,994.7 847.4,995.2 906.0,999.6 964.6,1006.6 1023.2,1006.6 1081.9,1006.6 1140.5,1001.3 1199.1,1002.2 1257.8,1000.2 1316.4,1005.1 1375.0,1004.8 1433.6,1006.0 1492.2,1005.4 1548.4,1006.0" fill="none" stroke="#e6b950" stroke-width="2" stroke-linejoin="round"/><polyline points="378.4,897.9 437.0,904.2 495.6,904.2 554.2,904.2 612.9,904.8 671.5,904.2 730.1,898.4 788.8,894.4 847.4,894.9 906.0,900.2 964.6,904.8 1023.2,903.7 1081.9,902.8 1140.5,897.6 1199.1,897.6 1257.8,895.8 1316.4,900.8 1375.0,901.6 1433.6,891.5 1492.2,882.2 1548.4,856.5" fill="none" stroke="#89b275" stroke-width="2" stroke-linejoin="round"/><text class="ax" x="361.5" y="849.9" text-anchor="end">3.5 pps</text><text class="ax" x="361.5" y="891.8" text-anchor="end">3.0 pps</text><text class="ax" x="361.5" y="935.9" text-anchor="end">2.5 pps</text><text class="ax" x="361.5" y="979.9" text-anchor="end">2.0 pps</text><text class="ax" x="361.5" y="1024.0" text-anchor="end">1.5 pps</text><text class="ax" x="1568" y="849.9" text-anchor="start">6</text><text class="ax" x="1568" y="907.7" text-anchor="start">4</text><text class="ax" x="1568" y="965.8" text-anchor="start">2</text><text class="ax" x="1568" y="1024.0" text-anchor="start">0</text><text class="ax" x="437.0" y="1052.4" text-anchor="middle">03:18</text><text class="ax" x="671.5" y="1052.4" text-anchor="middle">03:19</text><text class="ax" x="906.0" y="1052.4" text-anchor="middle">03:20</text><text class="ax" x="1140.5" y="1052.4" text-anchor="middle">03:21</text><text class="ax" x="1375.0" y="1052.4" text-anchor="middle">03:22</text><rect x="302" y="1091.1" width="24" height="6.8" rx="3" fill="#85d0de"/><text x="334" y="1102.1" font-size="23.2" letter-spacing="-0.3" fill="#d8d9da" stroke="#d8d9da" stroke-width="0.3">SYN</text><rect x="399.5" y="1091.1" width="24" height="6.8" rx="3" fill="#e88a4c"/><text x="431.5" y="1102.1" font-size="23.2" letter-spacing="-0.3" fill="#d8d9da" stroke="#d8d9da" stroke-width="0.3">SYN-ACK</text><rect x="1421" y="1091.1" width="24" height="6.8" rx="3" fill="#e6b950"/><text x="1453" y="1102.1" font-size="23.2" letter-spacing="-0.3" fill="#d8d9da" stroke="#d8d9da" stroke-width="0.3">RST</text><rect x="1516" y="1091.1" width="24" height="6.8" rx="3" fill="#89b275"/><text x="1548" y="1102.1" font-size="23.2" letter-spacing="-0.3" fill="#d8d9da" stroke="#d8d9da" stroke-width="0.3">FIN</text></svg><svg style="left:1320px;top:362px" width="12" height="12" viewBox="0 0 12 12"><path d="M6.5,0 H10.5 V10.5 H0 V6.5 H6.5Z" fill="#595959"/></svg></div><div class="panel" style="left:1622px;top:750px;width:1338px;height:380px;"><div class="ptitle t med"><svg style="position:static;margin-right:10.2px;margin-top:3px;flex:none" width="26.4" height="24.6" viewBox="0 0 29 27"><path d="M14.5,25.6 C9,20.6 1.2,15 1.2,8.4 C1.2,4.2 4.4,1.2 8.2,1.2 C10.8,1.2 13.2,2.6 14.5,5 C15.8,2.6 18.2,1.2 20.8,1.2 C24.6,1.2 27.8,4.2 27.8,8.4 C27.8,15 20,20.6 14.5,25.6Z" fill="none" stroke="#dcdcdc" stroke-width="1.5"/><path d="M14.5,22.4 C10,18.4 3.8,13.8 3.8,8.6 C3.8,5.6 6,3.6 8.6,3.6 C11,3.6 13.2,5.2 14.5,8 C15.8,5.2 18,3.6 20.4,3.6 C23,3.6 25.2,5.6 25.2,8.6 C25.2,13.8 19,18.4 14.5,22.4Z" fill="#dcdcdc"/></svg><span style="letter-spacing:-0.37px;margin-right:2.63px">Missing TCPv4 SYN-ACKs</span></div><svg style="left:-2px;top:-2px" width="1338" height="380" viewBox="1622 750 1338 380"><rect x="1744" y="842" width="1166" height="113.60000000000002" fill="rgba(234,112,112,0.12)"/><rect x="1744" y="842.0" width="1166.0" height="2" fill="rgba(200,200,200,0.20)"/><rect x="1744" y="897.9" width="1166.0" height="2" fill="rgba(200,200,200,0.20)"/><rect x="1744" y="958.0" width="1166.0" height="2" fill="rgba(200,200,200,0.20)"/><rect x="1744" y="1016.1" width="1166.0" height="2" fill="rgba(200,200,200,0.20)"/><rect x="1806.0" y="842.0" width="2" height="174.1" fill="rgba(200,200,200,0.20)"/><rect x="2039.0" y="842.0" width="2" height="174.1" fill="rgba(200,200,200,0.20)"/><rect x="2272.0" y="842.0" width="2" height="174.1" fill="rgba(200,200,200,0.20)"/><rect x="2505.0" y="842.0" width="2" height="174.1" fill="rgba(200,200,200,0.20)"/><rect x="2738.0" y="842.0" width="2" height="174.1" fill="rgba(200,200,200,0.20)"/><rect x="1744" y="953.8" width="1166" height="4" fill="#a63f33"/><polygon points="1748.8,958.2 1807.0,958.2 1865.2,958.2 1923.5,958.2 1981.8,958.2 2040.0,958.2 2098.2,958.2 2156.5,958.2 2214.8,958.2 2273.0,958.2 2331.2,958.2 2389.5,958.2 2447.8,958.2 2506.0,958.2 2564.2,958.2 2622.5,958.2 2680.8,958.2 2739.0,958.2 2797.2,876.6 2855.5,865.0 2910.0,865.0 2910.0,1017.1 1748.8,1017.1" fill="rgba(137,178,117,0.1)"/><polyline points="1748.8,958.2 1807.0,958.2 1865.2,958.2 1923.5,958.2 1981.8,958.2 2040.0,958.2 2098.2,958.2 2156.5,958.2 2214.8,958.2 2273.0,958.2 2331.2,958.2 2389.5,958.2 2447.8,958.2 2506.0,958.2 2564.2,958.2 2622.5,958.2 2680.8,958.2 2739.0,958.2 2797.2,876.6 2855.5,865.0 2910.0,865.0" fill="none" stroke="#89b275" stroke-width="2" stroke-linejoin="round"/><text class="ax" x="1733" y="849.9" text-anchor="end">0.40 pps</text><text class="ax" x="1733" y="905.8" text-anchor="end">0.30 pps</text><text class="ax" x="1733" y="964.4" text-anchor="end">0.20 pps</text><text class="ax" x="1733" y="1024.0" text-anchor="end">0.10 pps</text><text class="ax" x="1807.0" y="1052.4" text-anchor="middle">03:18</text><text class="ax" x="2040.0" y="1052.4" text-anchor="middle">03:19</text><text class="ax" x="2273.0" y="1052.4" text-anchor="middle">03:20</text><text class="ax" x="2506.0" y="1052.4" text-anchor="middle">03:21</text><text class="ax" x="2739.0" y="1052.4" text-anchor="middle">03:22</text><rect x="1660" y="1091.1" width="24" height="6.8" rx="3" fill="#89b275"/><text x="1692" y="1102.1" font-size="23.2" letter-spacing="-0.3" fill="#d8d9da" stroke="#d8d9da" stroke-width="0.3">Missing SYN-ACK</text></svg><svg style="left:1320px;top:362px" width="12" height="12" viewBox="0 0 12 12"><path d="M6.5,0 H10.5 V10.5 H0 V6.5 H6.5Z" fill="#595959"/></svg></div><div class="panel" style="left:264px;top:1150px;width:1338px;height:380px;"><div class="ptitle t med"><span style="letter-spacing:-0.75px;margin-right:-0.75px">TCPv6</span></div><svg style="left:-2px;top:-2px" width="1338" height="380" viewBox="264 1150 1338 380"><rect x="380" y="1242.0" width="1172.0" height="2" fill="rgba(200,200,200,0.20)"/><rect x="380" y="1294.0" width="1172.0" height="2" fill="rgba(200,200,200,0.20)"/><rect x="380" y="1347.7" width="1172.0" height="2" fill="rgba(200,200,200,0.20)"/><rect x="380" y="1399.8" width="1172.0" height="2" fill="rgba(200,200,200,0.20)"/><rect x="380" y="1453.5" width="1172.0" height="2" fill="rgba(200,200,200,0.20)"/><rect x="441.9" y="1242.0" width="2" height="211.5" fill="rgba(200,200,200,0.20)"/><rect x="675.9" y="1242.0" width="2" height="211.5" fill="rgba(200,200,200,0.20)"/><rect x="909.9" y="1242.0" width="2" height="211.5" fill="rgba(200,200,200,0.20)"/><rect x="1143.9" y="1242.0" width="2" height="211.5" fill="rgba(200,200,200,0.20)"/><rect x="1377.9" y="1242.0" width="2" height="211.5" fill="rgba(200,200,200,0.20)"/><text class="ax" x="368" y="1249.9" text-anchor="end">1.0 pps</text><text class="ax" x="368" y="1301.9" text-anchor="end">0.5 pps</text><text class="ax" x="368" y="1355.6" text-anchor="end">0 pps</text><text class="ax" x="368" y="1407.7" text-anchor="end">-0.5 pps</text><text class="ax" x="368" y="1461.4" text-anchor="end">-1.0 pps</text><text class="ax" x="442.9" y="1489.9" text-anchor="middle">03:18</text><text class="ax" x="676.9" y="1489.9" text-anchor="middle">03:19</text><text class="ax" x="910.9" y="1489.9" text-anchor="middle">03:20</text><text class="ax" x="1144.9" y="1489.9" text-anchor="middle">03:21</text><text class="ax" x="1378.9" y="1489.9" text-anchor="middle">03:22</text><text x="933" y="1310" text-anchor="middle" font-size="26.2" fill="#d8d9da">No data points</text></svg><svg style="left:1320px;top:362px" width="12" height="12" viewBox="0 0 12 12"><path d="M6.5,0 H10.5 V10.5 H0 V6.5 H6.5Z" fill="#595959"/></svg></div><div class="panel" style="left:1622px;top:1150px;width:1338px;height:380px;"><div class="ptitle t med"><svg style="position:static;margin-right:10.2px;margin-top:3px;flex:none" width="26.4" height="24.6" viewBox="0 0 29 27"><path d="M14.5,25.6 C9,20.6 1.2,15 1.2,8.4 C1.2,4.2 4.4,1.2 8.2,1.2 C10.8,1.2 13.2,2.6 14.5,5 C15.8,2.6 18.2,1.2 20.8,1.2 C24.6,1.2 27.8,4.2 27.8,8.4 C27.8,15 20,20.6 14.5,25.6Z" fill="none" stroke="#dcdcdc" stroke-width="1.5"/><path d="M14.5,22.4 C10,18.4 3.8,13.8 3.8,8.6 C3.8,5.6 6,3.6 8.6,3.6 C11,3.6 13.2,5.2 14.5,8 C15.8,5.2 18,3.6 20.4,3.6 C23,3.6 25.2,5.6 25.2,8.6 C25.2,13.8 19,18.4 14.5,22.4Z" fill="#dcdcdc"/></svg><span style="letter-spacing:-0.37px;margin-right:2.63px">Missing TCPv6 SYN-ACKs</span></div><svg style="left:-2px;top:-2px" width="1338" height="380" viewBox="1622 1150 1338 380"><rect x="1738" y="1242" width="1172" height="84" fill="rgba(234,112,112,0.12)"/><rect x="1738" y="1242.0" width="1172.0" height="2" fill="rgba(200,200,200,0.20)"/><rect x="1738" y="1294.0" width="1172.0" height="2" fill="rgba(200,200,200,0.20)"/><rect x="1738" y="1347.7" width="1172.0" height="2" fill="rgba(200,200,200,0.20)"/><rect x="1738" y="1399.8" width="1172.0" height="2" fill="rgba(200,200,200,0.20)"/><rect x="1738" y="1453.5" width="1172.0" height="2" fill="rgba(200,200,200,0.20)"/><rect x="1799.8" y="1242.0" width="2" height="211.5" fill="rgba(200,200,200,0.20)"/><rect x="2033.8" y="1242.0" width="2" height="211.5" fill="rgba(200,200,200,0.20)"/><rect x="2267.8" y="1242.0" width="2" height="211.5" fill="rgba(200,200,200,0.20)"/><rect x="2501.8" y="1242.0" width="2" height="211.5" fill="rgba(200,200,200,0.20)"/><rect x="2735.8" y="1242.0" width="2" height="211.5" fill="rgba(200,200,200,0.20)"/><rect x="1738" y="1324" width="1172" height="4" fill="#a63f33"/><text class="ax" x="1726" y="1249.9" text-anchor="end">1.0 pps</text><text class="ax" x="1726" y="1301.9" text-anchor="end">0.5 pps</text><text class="ax" x="1726" y="1355.6" text-anchor="end">0 pps</text><text class="ax" x="1726" y="1407.7" text-anchor="end">-0.5 pps</text><text class="ax" x="1726" y="1461.4" text-anchor="end">-1.0 pps</text><text class="ax" x="1800.8" y="1489.9" text-anchor="middle">03:18</text><text class="ax" x="2034.8" y="1489.9" text-anchor="middle">03:19</text><text class="ax" x="2268.8" y="1489.9" text-anchor="middle">03:20</text><text class="ax" x="2502.8" y="1489.9" text-anchor="middle">03:21</text><text class="ax" x="2736.8" y="1489.9" text-anchor="middle">03:22</text><text x="2291" y="1310" text-anchor="middle" font-size="26.2" fill="#d8d9da">No data points</text></svg><svg style="left:1320px;top:362px" width="12" height="12" viewBox="0 0 12 12"><path d="M6.5,0 H10.5 V10.5 H0 V6.5 H6.5Z" fill="#595959"/></svg></div><div class="panel" style="left:264px;top:1550px;width:1338px;height:380px;"><div class="ptitle t med"><span style="letter-spacing:-0.52px;margin-right:-0.52px">ICMPv4</span></div><svg style="left:-2px;top:-2px" width="1338" height="380" viewBox="264 1550 1338 380"><rect x="328.3" y="1642.0" width="1223.7" height="2" fill="rgba(200,200,200,0.20)"/><rect x="328.3" y="1728.0" width="1223.7" height="2" fill="rgba(200,200,200,0.20)"/><rect x="328.3" y="1814.6" width="1223.7" height="2" fill="rgba(200,200,200,0.20)"/><rect x="392.0" y="1642.0" width="2" height="172.6" fill="rgba(200,200,200,0.20)"/><rect x="636.5" y="1642.0" width="2" height="172.6" fill="rgba(200,200,200,0.20)"/><rect x="881.0" y="1642.0" width="2" height="172.6" fill="rgba(200,200,200,0.20)"/><rect x="1125.5" y="1642.0" width="2" height="172.6" fill="rgba(200,200,200,0.20)"/><rect x="1370.0" y="1642.0" width="2" height="172.6" fill="rgba(200,200,200,0.20)"/><polygon points="331.9,1659.0 393.0,1743.0 454.1,1690.0 515.2,1666.0 576.4,1659.0 637.5,1743.0 698.6,1690.0 759.8,1666.0 820.9,1659.0 882.0,1743.0 943.1,1690.0 1004.2,1666.0 1065.4,1659.0 1126.5,1743.0 1187.6,1690.0 1248.8,1666.0 1309.9,1659.0 1371.0,1743.0 1432.1,1690.0 1493.2,1666.0 1552.0,1659.3 1552.0,1815.6 331.9,1815.6" fill="rgba(133,208,222,0.1)"/><polygon points="331.9,1729.0 393.0,1770.8 454.1,1746.0 515.2,1735.6 576.4,1729.0 637.5,1770.8 698.6,1746.0 759.8,1735.6 820.9,1729.0 882.0,1770.8 943.1,1746.0 1004.2,1735.6 1065.4,1729.0 1126.5,1770.8 1187.6,1746.0 1248.8,1735.6 1309.9,1729.0 1371.0,1770.8 1432.1,1746.0 1493.2,1735.6 1552.0,1729.3 1552.0,1815.6 331.9,1815.6" fill="rgba(230,185,80,0.1)"/><polyline points="331.9,1659.0 393.0,1743.0 454.1,1690.0 515.2,1666.0 576.4,1659.0 637.5,1743.0 698.6,1690.0 759.8,1666.0 820.9,1659.0 882.0,1743.0 943.1,1690.0 1004.2,1666.0 1065.4,1659.0 1126.5,1743.0 1187.6,1690.0 1248.8,1666.0 1309.9,1659.0 1371.0,1743.0 1432.1,1690.0 1493.2,1666.0 1552.0,1659.3" fill="none" stroke="#85d0de" stroke-width="2" stroke-linejoin="round"/><polyline points="331.9,1729.0 393.0,1770.8 454.1,1746.0 515.2,1735.6 576.4,1729.0 637.5,1770.8 698.6,1746.0 759.8,1735.6 820.9,1729.0 882.0,1770.8 943.1,1746.0 1004.2,1735.6 1065.4,1729.0 1126.5,1770.8 1187.6,1746.0 1248.8,1735.6 1309.9,1729.0 1371.0,1770.8 1432.1,1746.0 1493.2,1735.6 1552.0,1729.3" fill="none" stroke="#e6b950" stroke-width="2" stroke-linejoin="round"/><rect x="331.9" y="1814.6" width="1220.1" height="2.2" fill="#e88a4c"/><text class="ax" x="317" y="1649.9" text-anchor="end">1.0</text><text class="ax" x="317" y="1735.9" text-anchor="end">0.5</text><text class="ax" x="317" y="1822.5" text-anchor="end">0</text></svg><svg style="left:1320px;top:362px" width="12" height="12" viewBox="0 0 12 12"><path d="M6.5,0 H10.5 V10.5 H0 V6.5 H6.5Z" fill="#595959"/></svg></div><div class="panel" style="left:1622px;top:1550px;width:1338px;height:380px;"><div class="ptitle t med"><svg style="position:static;margin-right:10.2px;margin-top:3px;flex:none" width="26.4" height="24.6" viewBox="0 0 29 27"><path d="M14.5,25.6 C9,20.6 1.2,15 1.2,8.4 C1.2,4.2 4.4,1.2 8.2,1.2 C10.8,1.2 13.2,2.6 14.5,5 C15.8,2.6 18.2,1.2 20.8,1.2 C24.6,1.2 27.8,4.2 27.8,8.4 C27.8,15 20,20.6 14.5,25.6Z" fill="none" stroke="#dcdcdc" stroke-width="1.5"/><path d="M14.5,22.4 C10,18.4 3.8,13.8 3.8,8.6 C3.8,5.6 6,3.6 8.6,3.6 C11,3.6 13.2,5.2 14.5,8 C15.8,5.2 18,3.6 20.4,3.6 C23,3.6 25.2,5.6 25.2,8.6 C25.2,13.8 19,18.4 14.5,22.4Z" fill="#dcdcdc"/></svg><span style="letter-spacing:-0.14px;margin-right:2.86px">Missing ICMPv4 Echo-Reply</span></div><svg style="left:-2px;top:-2px" width="1338" height="380" viewBox="1622 1550 1338 380"><rect x="1732" y="1642" width="1178" height="173.5999999999999" fill="rgba(234,112,112,0.12)"/><rect x="1732" y="1642.0" width="1178.0" height="2" fill="rgba(200,200,200,0.20)"/><rect x="1732" y="1683.8" width="1178.0" height="2" fill="rgba(200,200,200,0.20)"/><rect x="1732" y="1728.0" width="1178.0" height="2" fill="rgba(200,200,200,0.20)"/><rect x="1732" y="1771.8" width="1178.0" height="2" fill="rgba(200,200,200,0.20)"/><rect x="1793.7" y="1642.0" width="2" height="172.6" fill="rgba(200,200,200,0.20)"/><rect x="2029.1" y="1642.0" width="2" height="172.6" fill="rgba(200,200,200,0.20)"/><rect x="2264.5" y="1642.0" width="2" height="172.6" fill="rgba(200,200,200,0.20)"/><rect x="2499.9" y="1642.0" width="2" height="172.6" fill="rgba(200,200,200,0.20)"/><rect x="2735.3" y="1642.0" width="2" height="172.6" fill="rgba(200,200,200,0.20)"/><polygon points="1735.9,1685.0 1794.7,1789.4 1853.5,1720.0 1912.4,1685.0 1971.2,1685.0 2030.1,1789.4 2088.9,1720.0 2147.8,1685.0 2206.7,1685.0 2265.5,1789.4 2324.3,1720.0 2383.2,1685.0 2442.1,1685.0 2500.9,1789.4 2559.8,1720.0 2618.6,1685.0 2677.4,1685.0 2736.3,1789.4 2795.2,1720.0 2854.0,1685.0 2910.0,1685.0 2910.0,1815.6 1735.9,1815.6" fill="rgba(137,178,117,0.1)"/><polyline points="1735.9,1685.0 1794.7,1789.4 1853.5,1720.0 1912.4,1685.0 1971.2,1685.0 2030.1,1789.4 2088.9,1720.0 2147.8,1685.0 2206.7,1685.0 2265.5,1789.4 2324.3,1720.0 2383.2,1685.0 2442.1,1685.0 2500.9,1789.4 2559.8,1720.0 2618.6,1685.0 2677.4,1685.0 2736.3,1789.4 2795.2,1720.0 2854.0,1685.0 2910.0,1685.0" fill="none" stroke="#89b275" stroke-width="2" stroke-linejoin="round"/><rect x="1732" y="1813.6" width="1178" height="4" fill="#a63f33"/><text class="ax" x="1720" y="1649.9" text-anchor="end">0.5 pps</text><text class="ax" x="1720" y="1691.7" text-anchor="end">0.4 pps</text><text class="ax" x="1720" y="1735.9" text-anchor="end">0.3 pps</text><text class="ax" x="1720" y="1779.7" text-anchor="end">0.2 pps</text><text class="ax" x="1720" y="1822.5" text-anchor="end">0.1 pps</text></svg><svg style="left:1320px;top:362px" width="12" height="12" viewBox="0 0 12 12"><path d="M6.5,0 H10.5 V10.5 H0 V6.5 H6.5Z" fill="#595959"/></svg></div><div class="panel" style="left:1622px;top:350px;width:1338px;height:380px;"><div class="ptitle t med"><span style="letter-spacing:0.23px;margin-right:0.23px">Top 10 Port Distribution</span></div><svg style="left:-2px;top:-2px" width="1338" height="380" viewBox="1622 350 1338 380"><rect x="1726" y="442.0" width="786.0" height="2" fill="rgba(200,200,200,0.20)"/><rect x="1726" y="486.5" width="786.0" height="2" fill="rgba(200,200,200,0.20)"/><rect x="1726" y="531.2" width="786.0" height="2" fill="rgba(200,200,200,0.20)"/><rect x="1726" y="575.9" width="786.0" height="2" fill="rgba(200,200,200,0.20)"/><rect x="1726" y="620.6" width="786.0" height="2" fill="rgba(200,200,200,0.20)"/><rect x="1726" y="665.6" width="786.0" height="2" fill="rgba(200,200,200,0.20)"/><rect x="1780.3" y="442.0" width="2" height="223.6" fill="rgba(200,200,200,0.20)"/><rect x="1937.3" y="442.0" width="2" height="223.6" fill="rgba(200,200,200,0.20)"/><rect x="2094.3" y="442.0" width="2" height="223.6" fill="rgba(200,200,200,0.20)"/><rect x="2251.3" y="442.0" width="2" height="223.6" fill="rgba(200,200,200,0.20)"/><rect x="2408.3" y="442.0" width="2" height="223.6" fill="rgba(200,200,200,0.20)"/><polygon points="1726.3,659.4 1742.0,659.9 1781.3,660.6 1820.5,660.6 1859.8,660.6 1899.0,660.5 1938.3,660.1 1977.5,659.4 2016.8,658.9 2056.1,659.1 2095.3,659.7 2134.6,660.3 2173.8,660.5 2213.1,660.5 2252.3,659.5 2291.6,659.2 2330.8,659.2 2370.1,659.9 2409.3,660.3 2409.3,666.6 1726.3,666.6" fill="rgba(154,144,148,0.15)"/><polygon points="1726.3,641.9 1742.0,643.6 1781.3,645.9 1820.5,645.9 1859.8,645.9 1899.0,645.6 1938.3,644.2 1977.5,641.9 2016.8,640.1 2056.1,640.7 2095.3,642.7 2134.6,644.8 2173.8,645.6 2213.1,645.6 2252.3,642.2 2291.6,641.0 2330.8,641.3 2370.1,643.6 2409.3,645.1 2409.3,660.3 2370.1,659.9 2330.8,659.2 2291.6,659.2 2252.3,659.5 2213.1,660.5 2173.8,660.5 2134.6,660.3 2095.3,659.7 2056.1,659.1 2016.8,658.9 1977.5,659.4 1938.3,660.1 1899.0,660.5 1859.8,660.6 1820.5,660.6 1781.3,660.6 1742.0,659.9 1726.3,659.4" fill="rgba(192,102,42,0.1)"/><polygon points="1726.3,602.6 1742.0,603.2 1781.3,604.1 1820.5,604.1 1859.8,604.1 1899.0,604.1 1938.3,602.6 1977.5,600.9 2016.8,601.5 2056.1,602.0 2095.3,604.1 2134.6,604.1 2173.8,604.1 2213.1,604.1 2252.3,602.3 2291.6,601.7 2330.8,601.5 2370.1,603.2 2409.3,604.4 2448.9,600.3 2488.3,596.8 2488.3,666.6 2411.4,666.6 2409.3,645.1 2370.1,643.6 2330.8,641.3 2291.6,641.0 2252.3,642.2 2213.1,645.6 2173.8,645.6 2134.6,644.8 2095.3,642.7 2056.1,640.7 2016.8,640.1 1977.5,641.9 1938.3,644.2 1899.0,645.6 1859.8,645.9 1820.5,645.9 1781.3,645.9 1742.0,643.6 1726.3,641.9" fill="rgba(183,82,172,0.1)"/><polygon points="1726.3,565.7 1742.0,566.3 1781.3,567.2 1820.5,567.2 1859.8,567.2 1899.0,567.2 1938.3,565.1 1977.5,564.2 2016.8,564.5 2056.1,565.1 2095.3,567.2 2134.6,567.2 2173.8,567.2 2213.1,567.2 2252.3,565.1 2291.6,564.8 2330.8,564.8 2370.1,566.3 2409.3,566.9 2448.6,563.4 2487.8,559.6 2487.8,596.8 2448.6,600.3 2409.3,604.4 2370.1,603.2 2330.8,601.5 2291.6,601.7 2252.3,602.3 2213.1,604.1 2173.8,604.1 2134.6,604.1 2095.3,604.1 2056.1,602.0 2016.8,601.5 1977.5,600.9 1938.3,602.6 1899.0,604.1 1859.8,604.1 1820.5,604.1 1781.3,604.1 1742.0,603.2 1726.3,602.6" fill="rgba(82,130,189,0.1)"/><polygon points="1726.3,563.1 1742.0,564.2 1781.3,565.7 1820.5,565.7 1859.8,565.7 1899.0,565.7 1938.3,563.7 1977.5,561.9 2016.8,562.8 2056.1,563.4 2095.3,565.1 2134.6,565.1 2173.8,565.1 2213.1,565.1 2252.3,563.7 2291.6,563.4 2330.8,563.7 2370.1,564.8 2409.3,565.4 2448.6,545.9 2487.8,526.2 2487.8,559.6 2448.6,563.4 2409.3,566.9 2370.1,566.3 2330.8,564.8 2291.6,564.8 2252.3,565.1 2213.1,567.2 2173.8,567.2 2134.6,567.2 2095.3,567.2 2056.1,565.1 2016.8,564.5 1977.5,564.2 1938.3,565.1 1899.0,567.2 1859.8,567.2 1820.5,567.2 1781.3,567.2 1742.0,566.3 1726.3,565.7" fill="rgba(230,185,80,0.1)"/><polygon points="1726.3,546.8 1742.0,548.3 1781.3,550.0 1820.5,549.7 1859.8,549.4 1899.0,549.1 1938.3,548.3 1977.5,546.2 2016.8,547.1 2056.1,547.4 2095.3,550.0 2134.6,549.4 2173.8,548.8 2213.1,548.8 2252.3,548.3 2291.6,548.0 2330.8,547.7 2370.1,548.8 2409.3,549.7 2448.6,529.4 2487.8,510.5 2487.8,526.2 2448.6,545.9 2409.3,565.4 2370.1,564.8 2330.8,563.7 2291.6,563.4 2252.3,563.7 2213.1,565.1 2173.8,565.1 2134.6,565.1 2095.3,565.1 2056.1,563.4 2016.8,562.8 1977.5,561.9 1938.3,563.7 1899.0,565.7 1859.8,565.7 1820.5,565.7 1781.3,565.7 1742.0,564.2 1726.3,563.1" fill="rgba(232,138,76,0.1)"/><polygon points="2448.9,523.1 2488.3,502.7 2487.8,510.5 2448.6,529.4" fill="rgba(30,70,130,0.16)"/><polygon points="2448.9,516.9 2488.3,497.7 2488.3,502.7 2448.9,523.1" fill="rgba(26,42,32,0.5)"/><circle cx="1781.3" cy="665.4" r="3.1" fill="#85d0de"/><circle cx="1820.5" cy="665.4" r="3.1" fill="#7461a3"/><polyline points="1859.8,665.4 1938.3,665.4" fill="none" stroke="#d9584a" stroke-width="2.4" stroke-linejoin="round"/><circle cx="2095.3" cy="665.4" r="3.1" fill="#d9584a"/><polyline points="2134.6,665.4 2173.8,665.4" fill="none" stroke="#85d0de" stroke-width="2.4" stroke-linejoin="round"/><circle cx="2213.1" cy="665.4" r="3.1" fill="#7461a3"/><circle cx="2370.1" cy="665.4" r="3.1" fill="#7461a3"/><polyline points="1726.3,659.4 1742.0,659.9 1781.3,660.6 1820.5,660.6 1859.8,660.6 1899.0,660.5 1938.3,660.1 1977.5,659.4 2016.8,658.9 2056.1,659.1 2095.3,659.7 2134.6,660.3 2173.8,660.5 2213.1,660.5 2252.3,659.5 2291.6,659.2 2330.8,659.2 2370.1,659.9 2409.3,660.3 2448.9,516.9 2488.3,497.7" fill="none" stroke="#5f8e48" stroke-width="1.9" stroke-linejoin="round"/><polyline points="1726.3,654.6 1742.0,655.4 1781.3,656.6 1820.5,656.6 1859.8,656.6 1899.0,656.4 1938.3,655.7 1977.5,654.6 2016.8,653.7 2056.1,654.0 2095.3,655.0 2134.6,656.0 2173.8,656.4 2213.1,656.4 2252.3,654.7 2291.6,654.2 2330.8,654.3 2370.1,655.4 2409.3,656.1 2448.9,510.2 2488.3,491.8" fill="none" stroke="#93301a" stroke-width="1.9" stroke-linejoin="round"/><polyline points="1726.3,652.5 1742.0,653.5 1781.3,654.8 1820.5,654.8 1859.8,654.8 1899.0,654.6 1938.3,653.8 1977.5,652.5 2016.8,651.5 2056.1,651.8 2095.3,653.0 2134.6,654.1 2173.8,654.6 2213.1,654.6 2252.3,652.6 2291.6,652.0 2330.8,652.1 2370.1,653.5 2409.3,654.3 2448.9,511.9 2488.3,493.9" fill="none" stroke="#7e2613" stroke-width="1.9" stroke-linejoin="round"/><polyline points="1726.3,649.2 1742.0,650.4 1781.3,652.0 1820.5,652.0 1859.8,652.0 1899.0,651.8 1938.3,650.8 1977.5,649.2 2016.8,647.9 2056.1,648.3 2095.3,649.8 2134.6,651.2 2173.8,651.8 2213.1,651.8 2252.3,649.4 2291.6,648.6 2330.8,648.8 2370.1,650.4 2409.3,651.4 2448.9,508.1 2488.3,489.4" fill="none" stroke="#d4a630" stroke-width="1.9" stroke-linejoin="round"/><polyline points="1726.3,644.9 1742.0,646.5 1781.3,648.5 1820.5,648.5 1859.8,648.5 1899.0,648.2 1938.3,647.0 1977.5,644.9 2016.8,643.4 2056.1,643.9 2095.3,645.7 2134.6,647.5 2173.8,648.2 2213.1,648.2 2252.3,645.2 2291.6,644.2 2330.8,644.4 2370.1,646.5 2409.3,647.7 2448.9,504.8 2488.3,485.8" fill="none" stroke="#bd682c" stroke-width="1.9" stroke-linejoin="round"/><polyline points="1726.3,641.9 1742.0,643.6 1781.3,645.9 1820.5,645.9 1859.8,645.9 1899.0,645.6 1938.3,644.2 1977.5,641.9 2016.8,640.1 2056.1,640.7 2095.3,642.7 2134.6,644.8 2173.8,645.6 2213.1,645.6 2252.3,642.2 2291.6,641.0 2330.8,641.3 2370.1,643.6 2409.3,645.1" fill="none" stroke="#3a80c2" stroke-width="1.9" stroke-linejoin="round"/><polyline points="1726.3,640.3 1742.0,642.0" fill="none" stroke="#9cc277" stroke-width="2.4" stroke-linejoin="round"/><polyline points="1977.5,640.3 2016.8,638.5 2056.1,639.1" fill="none" stroke="#9cc277" stroke-width="2.4" stroke-linejoin="round"/><polyline points="2252.3,640.4 2291.6,639.2 2330.8,639.5" fill="none" stroke="#85d0de" stroke-width="2.4" stroke-linejoin="round"/><polyline points="2370.1,642.4 2409.3,643.9 2448.9,503.5" fill="none" stroke="#85d0de" stroke-width="2.6" stroke-linejoin="round"/><polyline points="2448.9,502.7 2488.3,482.5" fill="none" stroke="#7461a3" stroke-width="2.6" stroke-linejoin="round"/><circle cx="2409.4" cy="644.8" r="3.1" fill="#7461a3"/><polyline points="2448.9,523.1 2488.3,502.7" fill="none" stroke="#2a5a9a" stroke-width="2" stroke-linejoin="round"/><polyline points="1726.3,602.6 1742.0,603.2 1781.3,604.1 1820.5,604.1 1859.8,604.1 1899.0,604.1 1938.3,602.6 1977.5,600.9 2016.8,601.5 2056.1,602.0 2095.3,604.1 2134.6,604.1 2173.8,604.1 2213.1,604.1 2252.3,602.3 2291.6,601.7 2330.8,601.5 2370.1,603.2 2409.3,604.4 2448.6,600.3 2487.8,596.8" fill="none" stroke="#b752ac" stroke-width="2" stroke-linejoin="round"/><polyline points="1726.3,565.7 1742.0,566.3 1781.3,567.2 1820.5,567.2 1859.8,567.2 1899.0,567.2 1938.3,565.1 1977.5,564.2 2016.8,564.5 2056.1,565.1 2095.3,567.2 2134.6,567.2 2173.8,567.2 2213.1,567.2 2252.3,565.1 2291.6,564.8 2330.8,564.8 2370.1,566.3 2409.3,566.9 2448.6,563.4 2487.8,559.6" fill="none" stroke="#5282bd" stroke-width="2" stroke-linejoin="round"/><polyline points="1726.3,563.1 1742.0,564.2 1781.3,565.7 1820.5,565.7 1859.8,565.7 1899.0,565.7 1938.3,563.7 1977.5,561.9 2016.8,562.8 2056.1,563.4 2095.3,565.1 2134.6,565.1 2173.8,565.1 2213.1,565.1 2252.3,563.7 2291.6,563.4 2330.8,563.7 2370.1,564.8 2409.3,565.4 2448.6,545.9 2487.8,526.2" fill="none" stroke="#e6b950" stroke-width="2" stroke-linejoin="round"/><polyline points="1726.3,546.8 1742.0,548.3 1781.3,550.0 1820.5,549.7 1859.8,549.4 1899.0,549.1 1938.3,548.3 1977.5,546.2 2016.8,547.1 2056.1,547.4 2095.3,550.0 2134.6,549.4 2173.8,548.8 2213.1,548.8 2252.3,548.3 2291.6,548.0 2330.8,547.7 2370.1,548.8 2409.3,549.7 2448.6,529.4 2487.8,510.5" fill="none" stroke="#e88a4c" stroke-width="2" stroke-linejoin="round"/><text class="ax" x="1713" y="449.9" text-anchor="end">50 pps</text><text class="ax" x="1713" y="494.4" text-anchor="end">40 pps</text><text class="ax" x="1713" y="539.1" text-anchor="end">30 pps</text><text class="ax" x="1713" y="583.8" text-anchor="end">20 pps</text><text class="ax" x="1713" y="628.5" text-anchor="end">10 pps</text><text class="ax" x="1713" y="673.5" text-anchor="end">0 pps</text><text class="ax" x="1781.3" y="701.9" text-anchor="middle">03:18</text><text class="ax" x="1938.3" y="701.9" text-anchor="middle">03:19</text><text class="ax" x="2095.3" y="701.9" text-anchor="middle">03:20</text><text class="ax" x="2252.3" y="701.9" text-anchor="middle">03:21</text><text class="ax" x="2409.3" y="701.9" text-anchor="middle">03:22</text><defs><clipPath id="lgclip"><rect x="2540" y="430" width="420" height="282.6"/></clipPath></defs><g clip-path="url(#lgclip)"><text class="med" x="2898" y="462" text-anchor="end" font-size="24" letter-spacing="0.1" fill="#4fb0e2" stroke="#4fb0e2" stroke-width="1.0">current</text><path d="M2898.5,449.5 h14.5 l-7.25,8z" fill="#4fb0e2"/><rect x="2554" y="474" width="377" height="52" fill="#262628"/><rect x="2574.3" y="501.0" width="24" height="6.8" rx="3" fill="#b752ac"/><text class="ax" x="2612.5" y="507.8" fill="#d8d9da">53/UDP</text><text class="ax" x="2912" y="507.8" text-anchor="end">15.48 pps</text><rect x="2574.3" y="553.0" width="24" height="6.8" rx="3" fill="#5282bd"/><text class="ax" x="2612.5" y="559.8" fill="#d8d9da">80/TCP</text><text class="ax" x="2912" y="559.8" text-anchor="end">8.26 pps</text><rect x="2554" y="578" width="377" height="52" fill="#262628"/><rect x="2574.3" y="605.0" width="24" height="6.8" rx="3" fill="#e6bd55"/><text class="ax" x="2612.5" y="611.8" fill="#d8d9da">3000/TCP</text><text class="ax" x="2912" y="611.8" text-anchor="end">7.48 pps</text><rect x="2574.3" y="657.0" width="24" height="6.8" rx="3" fill="#e48a4e"/><text class="ax" x="2612.5" y="663.8" fill="#d8d9da">4240/TCP</text><text class="ax" x="2912" y="663.8" text-anchor="end">3.48 pps</text><rect x="2554" y="682" width="377" height="52" fill="#262628"/><rect x="2574.3" y="709.0" width="24" height="6.8" rx="3" fill="#1e4682"/><text class="ax" x="2612.5" y="715.8" fill="#d8d9da">9090/TCP</text><text class="ax" x="2912" y="715.8" text-anchor="end">1.82 pps</text></g><rect x="2930" y="440.5" width="12" height="97" rx="6" fill="url(#sbg)"/><defs><linearGradient id="sbg" x1="0" y1="0" x2="0" y2="1"><stop offset="0" stop-color="#47495c"/><stop offset="1" stop-color="#3e3e44"/></linearGradient></defs><circle cx="2938.2" cy="367.5" r="2.5" fill="#8a8a8a"/><circle cx="2945.2" cy="370.4" r="3.2" fill="#8a8a8a"/><circle cx="2948.1" cy="377.4" r="2.0" fill="#8a8a8a"/><circle cx="2945.2" cy="384.4" r="1.8" fill="#8a8a8a"/><circle cx="2938.2" cy="387.3" r="1.8" fill="#8a8a8a"/><circle cx="2931.2" cy="384.4" r="1.8" fill="#8a8a8a"/><circle cx="2928.3" cy="377.4" r="1.9" fill="#8a8a8a"/><circle cx="2931.2" cy="370.4" r="2.2" fill="#8a8a8a"/></svg><svg style="left:1320px;top:362px" width="12" height="12" viewBox="0 0 12 12"><path d="M6.5,0 H10.5 V10.5 H0 V6.5 H6.5Z" fill="#595959"/></svg></div></div><div style="position:absolute;left:0;top:0;right:0;bottom:0;border-radius:11px;box-shadow:inset 0 0 0 1.5px rgba(255,255,255,0.20),inset 0 1.5px 0 0.5px rgba(255,255,255,0.18);pointer-events:none;"></div></div>
</body></html>
